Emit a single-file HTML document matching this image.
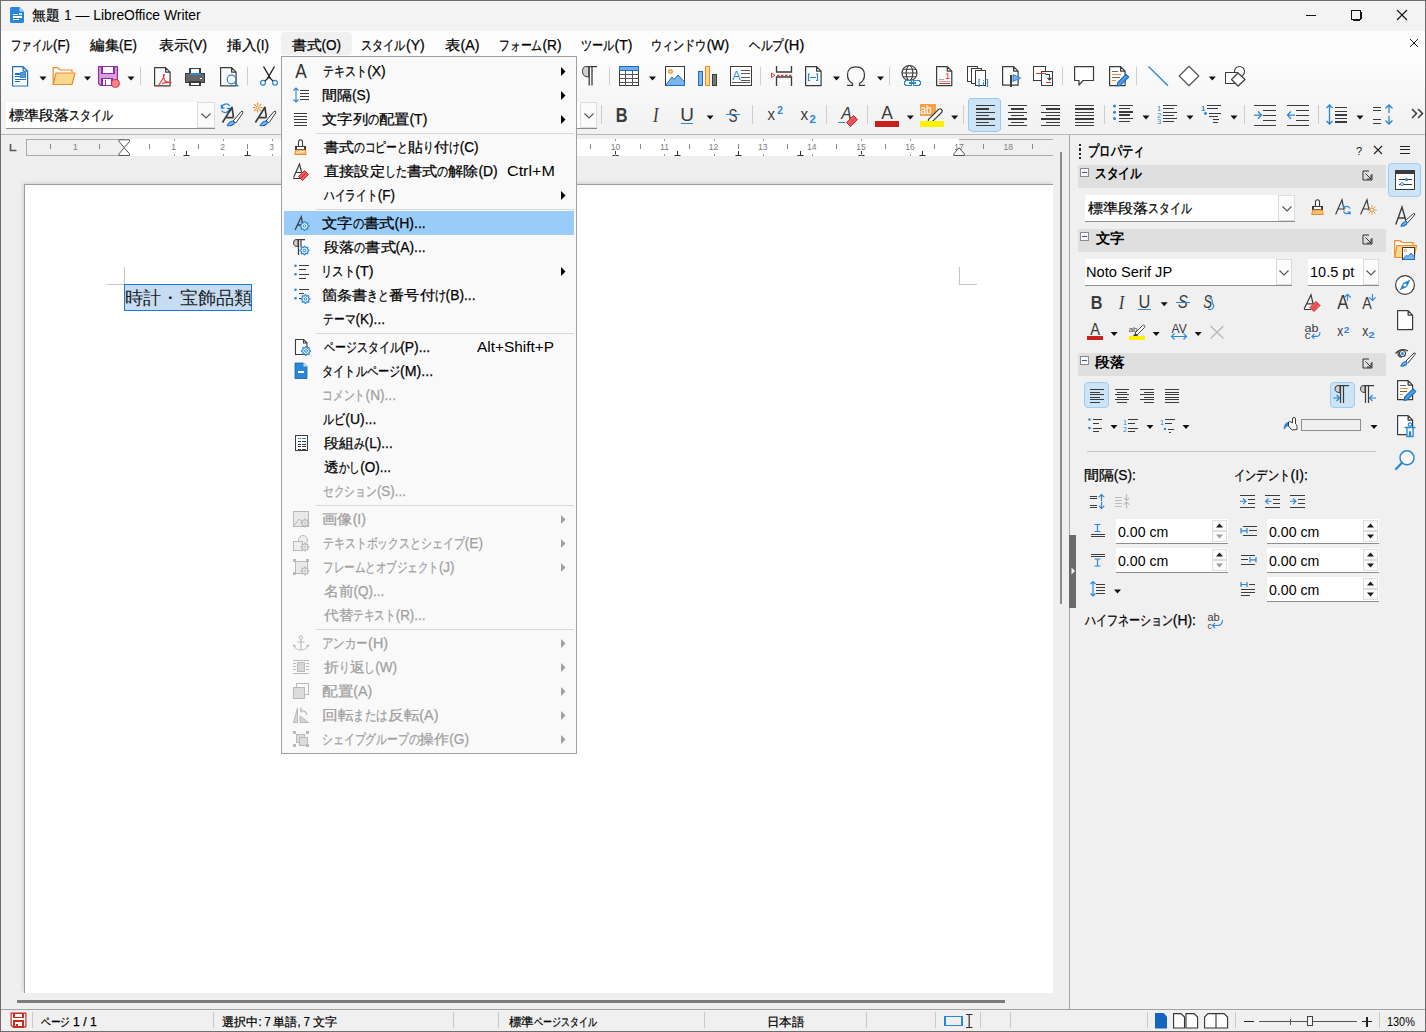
<!DOCTYPE html>
<html><head><meta charset="utf-8"><title>LibreOffice Writer</title><style>
*{box-sizing:border-box;margin:0;padding:0}
html,body{width:1426px;height:1032px;overflow:hidden;background:#f0f0f0}
body{position:relative;font-family:"Liberation Sans",sans-serif;color:#1a1a1a}
.a{position:absolute}
.t{position:absolute;white-space:nowrap;transform-origin:0 0;line-height:1;color:#000;-webkit-text-stroke:0.25px currentColor}
svg{position:absolute;overflow:visible}
svg rect{shape-rendering:crispEdges}
.r{display:inline-block;white-space:pre}
.r>span{display:inline-block;transform-origin:0 0;white-space:pre}
</style></head>
<body>
<div class="a" style="left:0px;top:0px;width:1426px;height:31px;background:#f3f3f3"></div><div class="a" style="left:0px;top:31px;width:1426px;height:103px;background:linear-gradient(#fdfdfd 0px,#fcfcfc 30px,#f1f1f1 103px)"></div><div class="a" style="left:0px;top:134px;width:1426px;height:1px;background:#b9b9b9"></div><div class="a" style="left:281px;top:32px;width:71px;height:23px;background:#f0f0f0;border-radius:4px"></div><div class="a" style="left:0px;top:135px;width:1069px;height:874px;background:#efefef"></div><div class="a" style="left:26px;top:139px;width:1027px;height:17px;background:#f0f0f0;border:1px solid #a9a9a9;border-right:none"></div><div class="a" style="left:124px;top:139px;width:835px;height:17px;background:#ffffff"></div><div class="a" style="left:24px;top:184px;width:1029px;height:809px;background:#ffffff;border-top:1px solid #9c9c9c;border-left:1px solid #9c9c9c;box-shadow:-1px -1px 4px rgba(0,0,0,.13)"></div><div class="a" style="left:1053px;top:150px;width:6px;height:843px;background:#efefef"></div><div class="a" style="left:0px;top:993px;width:1060px;height:7px;background:#efefef"></div><div class="a" style="left:107px;top:284px;width:18px;height:1px;background:#c4c4c4"></div><div class="a" style="left:124px;top:267px;width:1px;height:18px;background:#c4c4c4"></div><div class="a" style="left:959px;top:284px;width:18px;height:1px;background:#c4c4c4"></div><div class="a" style="left:959px;top:267px;width:1px;height:18px;background:#c4c4c4"></div><div class="a" style="left:124px;top:284px;width:128px;height:27px;background:#c5dcf2;border:1px solid #1c7ad4"></div><div class="a" style="left:1060px;top:152px;width:2px;height:452px;background:#8a8a8a"></div><div class="a" style="left:17px;top:1000px;width:988px;height:3px;background:#7c7c7c"></div><div class="a" style="left:1069px;top:135px;width:357px;height:874px;background:#f0f0f0"></div><div class="a" style="left:1069px;top:135px;width:1px;height:874px;background:#a6a6a6"></div><div class="a" style="left:1069px;top:535px;width:7px;height:73px;background:#6a6a6a"></div><svg style="left:1070px;top:566px" width="6" height="10"><path d="M1.5 1.5 L5 5 L1.5 8.5Z" fill="#f0f0f0"/></svg><div class="a" style="left:1078px;top:165px;width:308px;height:23px;background:#dfdfdf"></div><div class="a" style="left:1080px;top:168px;width:9px;height:9px;background:#fafafa;border:1px solid #8a8a8a"></div><div class="a" style="left:1082px;top:172px;width:5px;height:1px;background:#3b55a6"></div><div class="a" style="left:1078px;top:229px;width:308px;height:23px;background:#dfdfdf"></div><div class="a" style="left:1080px;top:232px;width:9px;height:9px;background:#fafafa;border:1px solid #8a8a8a"></div><div class="a" style="left:1082px;top:236px;width:5px;height:1px;background:#3b55a6"></div><div class="a" style="left:1078px;top:353px;width:308px;height:23px;background:#dfdfdf"></div><div class="a" style="left:1080px;top:356px;width:9px;height:9px;background:#fafafa;border:1px solid #8a8a8a"></div><div class="a" style="left:1082px;top:360px;width:5px;height:1px;background:#3b55a6"></div><div class="a" style="left:1388px;top:163px;width:33px;height:34px;background:#cde4f7;border:1px solid #99cdf3;border-radius:4px"></div><div class="a" style="left:1085px;top:195px;width:210px;height:27px;background:#fff;border-bottom:1px solid #8c8c8c"></div><div class="a" style="left:1278px;top:195px;width:17px;height:26px;background:#fbfbfb;border:1px solid #dcdcdc"></div><svg style="left:1281.5px;top:205.5px" width="10" height="6"><path d="M0.5 0.5 L5 5 L9.5 0.5" fill="none" stroke="#555" stroke-width="1.1"/></svg><div class="a" style="left:1085px;top:259px;width:207px;height:27px;background:#fff;border-bottom:1px solid #8c8c8c"></div><div class="a" style="left:1275.5px;top:259px;width:16.5px;height:26px;background:#fbfbfb;border:1px solid #dcdcdc"></div><svg style="left:1278.75px;top:269.5px" width="10" height="6"><path d="M0.5 0.5 L5 5 L9.5 0.5" fill="none" stroke="#555" stroke-width="1.1"/></svg><div class="a" style="left:1308px;top:259px;width:71px;height:27px;background:#fff;border-bottom:1px solid #8c8c8c"></div><div class="a" style="left:1363px;top:259px;width:16px;height:26px;background:#fbfbfb;border:1px solid #dcdcdc"></div><svg style="left:1366.0px;top:269.5px" width="10" height="6"><path d="M0.5 0.5 L5 5 L9.5 0.5" fill="none" stroke="#555" stroke-width="1.1"/></svg><div class="a" style="left:6px;top:102px;width:209px;height:27px;background:#fff;border-bottom:1px solid #8c8c8c"></div><div class="a" style="left:197px;top:102px;width:18px;height:26px;background:#fbfbfb;border:1px solid #dcdcdc"></div><svg style="left:201.0px;top:112.5px" width="10" height="6"><path d="M0.5 0.5 L5 5 L9.5 0.5" fill="none" stroke="#555" stroke-width="1.1"/></svg><div class="a" style="left:560px;top:102px;width:37px;height:27px;background:#fff;border-bottom:1px solid #8c8c8c"></div><div class="a" style="left:580px;top:102px;width:17px;height:26px;background:#fbfbfb;border:1px solid #dcdcdc"></div><svg style="left:583.5px;top:112.5px" width="10" height="6"><path d="M0.5 0.5 L5 5 L9.5 0.5" fill="none" stroke="#555" stroke-width="1.1"/></svg><div class="a" style="left:1084px;top:382px;width:25px;height:26px;background:#cde4f7;border:1px solid #99cdf3;border-radius:4px"></div><div class="a" style="left:1330px;top:382px;width:25px;height:26px;background:#cde4f7;border:1px solid #99cdf3;border-radius:4px"></div><div class="a" style="left:1301px;top:419px;width:60px;height:12px;background:#f0f0f0;border:1px solid #8d8d8d"></div><div class="a" style="left:1087px;top:451px;width:289px;height:1px;background:#c3c3c3"></div><div class="a" style="left:1116px;top:519px;width:112px;height:25px;background:#fff;border-bottom:1px solid #8c8c8c"></div><div class="a" style="left:1212px;top:520px;width:15px;height:11px;background:#fbfbfb;border:1px solid #dedede"></div><div class="a" style="left:1212px;top:531px;width:15px;height:11px;background:#fbfbfb;border:1px solid #dedede"></div><svg style="left:1216px;top:523px" width="8" height="16"><path d="M0 4.5 L3.5 0.5 L7 4.5Z" fill="#1a1a1a"/><path d="M0 11.5 L3.5 15.5 L7 11.5Z" fill="#9b9b9b"/></svg><div class="a" style="left:1116px;top:548px;width:112px;height:25px;background:#fff;border-bottom:1px solid #8c8c8c"></div><div class="a" style="left:1212px;top:549px;width:15px;height:11px;background:#fbfbfb;border:1px solid #dedede"></div><div class="a" style="left:1212px;top:560px;width:15px;height:11px;background:#fbfbfb;border:1px solid #dedede"></div><svg style="left:1216px;top:552px" width="8" height="16"><path d="M0 4.5 L3.5 0.5 L7 4.5Z" fill="#1a1a1a"/><path d="M0 11.5 L3.5 15.5 L7 11.5Z" fill="#9b9b9b"/></svg><div class="a" style="left:1267px;top:519px;width:112px;height:25px;background:#fff;border-bottom:1px solid #8c8c8c"></div><div class="a" style="left:1363px;top:520px;width:15px;height:11px;background:#fbfbfb;border:1px solid #dedede"></div><div class="a" style="left:1363px;top:531px;width:15px;height:11px;background:#fbfbfb;border:1px solid #dedede"></div><svg style="left:1367px;top:523px" width="8" height="16"><path d="M0 4.5 L3.5 0.5 L7 4.5Z" fill="#1a1a1a"/><path d="M0 11.5 L3.5 15.5 L7 11.5Z" fill="#1a1a1a"/></svg><div class="a" style="left:1267px;top:548px;width:112px;height:25px;background:#fff;border-bottom:1px solid #8c8c8c"></div><div class="a" style="left:1363px;top:549px;width:15px;height:11px;background:#fbfbfb;border:1px solid #dedede"></div><div class="a" style="left:1363px;top:560px;width:15px;height:11px;background:#fbfbfb;border:1px solid #dedede"></div><svg style="left:1367px;top:552px" width="8" height="16"><path d="M0 4.5 L3.5 0.5 L7 4.5Z" fill="#1a1a1a"/><path d="M0 11.5 L3.5 15.5 L7 11.5Z" fill="#1a1a1a"/></svg><div class="a" style="left:1267px;top:577px;width:112px;height:25px;background:#fff;border-bottom:1px solid #8c8c8c"></div><div class="a" style="left:1363px;top:578px;width:15px;height:11px;background:#fbfbfb;border:1px solid #dedede"></div><div class="a" style="left:1363px;top:589px;width:15px;height:11px;background:#fbfbfb;border:1px solid #dedede"></div><svg style="left:1367px;top:581px" width="8" height="16"><path d="M0 4.5 L3.5 0.5 L7 4.5Z" fill="#1a1a1a"/><path d="M0 11.5 L3.5 15.5 L7 11.5Z" fill="#1a1a1a"/></svg><div class="a" style="left:0px;top:1009px;width:1426px;height:23px;background:#f0f0f0;border-top:1px solid #a3a3a3"></div><div class="a" style="left:32px;top:1012px;width:1px;height:16px;background:#c9c9c9"></div><div class="a" style="left:212.6px;top:1012px;width:1px;height:16px;background:#c9c9c9"></div><div class="a" style="left:452.7px;top:1012px;width:1px;height:16px;background:#c9c9c9"></div><div class="a" style="left:498.4px;top:1012px;width:1px;height:16px;background:#c9c9c9"></div><div class="a" style="left:704px;top:1012px;width:1px;height:16px;background:#c9c9c9"></div><div class="a" style="left:865.7px;top:1012px;width:1px;height:16px;background:#c9c9c9"></div><div class="a" style="left:934.6px;top:1012px;width:1px;height:16px;background:#c9c9c9"></div><div class="a" style="left:980px;top:1012px;width:1px;height:16px;background:#c9c9c9"></div><div class="a" style="left:1010.4px;top:1012px;width:1px;height:16px;background:#c9c9c9"></div><div class="a" style="left:1146.7px;top:1012px;width:1px;height:16px;background:#c9c9c9"></div><div class="a" style="left:1234.6px;top:1012px;width:1px;height:16px;background:#c9c9c9"></div><div class="a" style="left:1378.5px;top:1012px;width:1px;height:16px;background:#c9c9c9"></div><div class="a" style="left:1069px;top:1000px;width:1px;height:9px;background:#a6a6a6"></div>
<svg style="left:0;top:0" width="1426" height="1032" viewBox="0 0 1426 1032"><g transform="translate(12,66)"><path d="M0.6 0.6 H11.1 L15.6 5.1 V20.0 H0.6Z M11.1 0.6 V5.1 H15.6" fill="#fff" stroke="#1e6ebf" stroke-width="1.2" stroke-linejoin="round"/><rect x="2.5" y="7.4" width="5" height="1.1" fill="#1e6ebf"/><rect x="2.5" y="9.9" width="5" height="1.1" fill="#1e6ebf"/><rect x="2.5" y="12.6" width="11" height="1.1" fill="#1e6ebf"/><rect x="2.5" y="15.2" width="5" height="1.1" fill="#1e6ebf"/><rect x="8.5" y="6.8" width="5.3" height="4.5" fill="#4d9de0" stroke="#1e6ebf" stroke-width="0.8"/></g><path d="M39.5 76.5 h7 l-3.5 4z" fill="#111"/><g transform="translate(52.5,67)"><path d="M0.7 17.5 V0.7 H5.5 L7.5 3 H19.5 V5.5" fill="none" stroke="#f08a2c" stroke-width="1.2"/><path d="M0.7 17.5 L3.5 6 H22.5 L19.5 17.5Z" fill="#f7d98d" stroke="#f08a2c" stroke-width="1.2" stroke-linejoin="round"/></g><path d="M84 76.5 h7 l-3.5 4z" fill="#111"/><g transform="translate(98,66)"><path d="M0.6 0.6 H19.4 V19.4 H2.5 L0.6 17.5Z" fill="#d7a1e0" stroke="#8e2ba6" stroke-width="1.2"/><rect x="4" y="0.6" width="12" height="6.5" fill="#fff" stroke="#8e2ba6" stroke-width="1.2"/><rect x="4" y="12.5" width="10" height="6.9" fill="#fff" stroke="#8e2ba6" stroke-width="1.2"/><rect x="6.5" y="14" width="1.8" height="5.4" fill="#8e2ba6"/><circle cx="17.4" cy="17.4" r="3.9" fill="#f5868b" stroke="#e22d35" stroke-width="1.1"/></g><path d="M127.5 76.5 h7 l-3.5 4z" fill="#111"/><rect x="140" y="67" width="1" height="18" fill="#cdcdcd"/><g transform="translate(154,67)"><path d="M0.6 0.6 H11.600000000000001 L16.1 5.1 V18.8 H0.6Z M11.600000000000001 0.6 V5.1 H16.1" fill="none" stroke="#3b3b3b" stroke-width="1.2" stroke-linejoin="round"/><path d="M4 19.5 L9.5 10.5 Q11 7 9.5 7.5 Q9 9 10.5 13 Q12.5 16 17.5 15.5 Q13 15 8 16.5" fill="none" stroke="#e3373a" stroke-width="1.1"/></g><g transform="translate(185,68)"><rect x="5" y="0.6" width="10" height="5.5" fill="#fff" stroke="#3b3b3b" stroke-width="1.2"/><rect x="4.5" y="5" width="11" height="2" fill="#2b87d3"/><rect x="0.6" y="5.6" width="19" height="9" rx="1" fill="#666" stroke="#3b3b3b" stroke-width="1.2"/><rect x="15" y="10" width="2" height="1" fill="#fff"/><rect x="5" y="14" width="10" height="3.8" fill="#fff" stroke="#3b3b3b" stroke-width="1.2"/><rect x="4.5" y="5" width="11" height="2" fill="#2b87d3"/></g><g transform="translate(220,67)"><path d="M0.6 0.6 H11.600000000000001 L16.1 5.1 V18.8 H0.6Z M11.600000000000001 0.6 V5.1 H16.1" fill="none" stroke="#3b3b3b" stroke-width="1.2" stroke-linejoin="round"/><circle cx="11.5" cy="12.5" r="4.3" fill="#fff" stroke="#2b87d3" stroke-width="1.2"/><path d="M14.5 15.5 L18.5 19.5" stroke="#2b87d3" stroke-width="1.3"/></g><rect x="247" y="67" width="1" height="18" fill="#cdcdcd"/><g transform="translate(260,66)"><path d="M3.5 0.5 L10.5 12.5 M14.5 0.5 L7.5 12.5" stroke="#222" stroke-width="1.4"/><circle cx="3" cy="16.8" r="2.4" fill="#fff" stroke="#2b87d3" stroke-width="1.2"/><circle cx="15" cy="16.8" r="2.4" fill="#fff" stroke="#2b87d3" stroke-width="1.2"/><path d="M5 15 L9 11 L13 15" fill="none" stroke="#222" stroke-width="1.2"/></g><g transform="translate(582,66)"><path d="M6.8 0.6 H3.5 Q0.5 0.6 0.5 5.5 Q0.5 11 6.8 11Z" fill="#cfcfcf" stroke="#3b3b3b" stroke-width="1"/><path d="M7.2 0.6 V19.6 M10 0.6 V19.6 M6.5 0.6 H15" stroke="#3b3b3b" stroke-width="1.3"/></g><rect x="609" y="67" width="1" height="18" fill="#cdcdcd"/><g transform="translate(619,66)"><rect x="0.5" y="0.5" width="19" height="19" fill="#fff" stroke="#3b3b3b" stroke-width="1"/><rect x="1" y="1" width="18" height="3" fill="#6fb0ec"/><rect x="0.5" y="0.5" width="19" height="3.5" fill="none" stroke="#1e6ebf" stroke-width="1"/><rect x="6" y="4" width="1" height="15.5" fill="#555"/><rect x="13" y="4" width="1" height="15.5" fill="#555"/><rect x="0.5" y="8" width="19" height="1" fill="#555"/><rect x="0.5" y="12" width="19" height="1" fill="#555"/><rect x="0.5" y="15.5" width="19" height="1" fill="#555"/></g><path d="M649 76.5 h7 l-3.5 4z" fill="#111"/><g transform="translate(665,66)"><rect x="0.6" y="0.6" width="19" height="19" fill="#fff" stroke="#3b3b3b" stroke-width="1.2"/><circle cx="5.5" cy="5.5" r="2" fill="#fbc97a" stroke="#f08a2c" stroke-width="1"/><path d="M1 19 L7 11 L9 13.5 L13 9 L19.5 16 V19.5 H1Z" fill="#7ab6ec" stroke="#1e6ebf" stroke-width="1"/></g><g transform="translate(698,66)"><rect x="0.5" y="5.5" width="4.2" height="14" fill="#7ab6ec" stroke="#1e6ebf" stroke-width="1"/><rect x="7.3" y="0.5" width="4.2" height="19" fill="#fad58a" stroke="#f08a2c" stroke-width="1"/><rect x="14.2" y="8.5" width="4.2" height="11" fill="#777" stroke="#3b3b3b" stroke-width="1"/></g><g transform="translate(730,66)"><rect x="0.6" y="0.6" width="21" height="19" fill="#fff" stroke="#3b3b3b" stroke-width="1.2"/><text x="2.3" y="14" font-family="Liberation Sans" font-size="12.5" fill="#2b87d3" font-weight="normal" font-style="normal" text-anchor="start">A</text><rect x="11" y="4.0" width="9" height="1.1" fill="#555"/><rect x="11" y="7.3" width="9" height="1.1" fill="#555"/><rect x="11" y="10.6" width="9" height="1.1" fill="#555"/><rect x="11" y="13.899999999999999" width="9" height="1.1" fill="#555"/><rect x="2" y="16" width="18" height="1.1" fill="#555"/></g><rect x="760" y="67" width="1" height="18" fill="#cdcdcd"/><g transform="translate(771,66)"><path d="M5.5 0 V6 H20.5 V0 M5.5 20 V11 H20.5 V20" fill="none" stroke="#3b3b3b" stroke-width="1.3"/><path d="M0.5 7 L4 9.3 L0.5 11.6Z" fill="none" stroke="#e3373a" stroke-width="1"/><path d="M6 9.4 H20.5" stroke="#e3373a" stroke-width="1.3" stroke-dasharray="2.5 1.5"/></g><g transform="translate(805,66)"><path d="M0.6 0.6 H11.600000000000001 L16.1 5.1 V19.6 H0.6Z M11.600000000000001 0.6 V5.1 H16.1" fill="none" stroke="#3b3b3b" stroke-width="1.2" stroke-linejoin="round"/><path d="M5 8 H3.5 V14.5 H5 M11 8 H12.5 V14.5 H11" fill="none" stroke="#2b87d3" stroke-width="1.2"/><rect x="5" y="10.6" width="6" height="1.5" fill="#2b87d3"/></g><path d="M833 76.5 h7 l-3.5 4z" fill="#111"/><g transform="translate(846,66)"><path d="M1 19.3 H6.5 V17.5 Q1.5 14.5 1.5 9 Q1.5 0.8 10 0.8 Q18.5 0.8 18.5 9 Q18.5 14.5 13.5 17.5 V19.3 H19" fill="none" stroke="#3b3b3b" stroke-width="1.3"/></g><path d="M877 76.5 h7 l-3.5 4z" fill="#111"/><rect x="889" y="67" width="1" height="18" fill="#cdcdcd"/><g transform="translate(901,65)"><circle cx="8.5" cy="8" r="7.5" fill="#fff" stroke="#3b3b3b" stroke-width="1.2"/><ellipse cx="8.5" cy="8" rx="3.3" ry="7.5" fill="none" stroke="#3b3b3b" stroke-width="1.1"/><path d="M1 8 H16 M2 4.2 H15 M2 11.8 H15" stroke="#3b3b3b" stroke-width="1.1"/><rect x="3.5" y="15.5" width="7.5" height="5" rx="2.5" fill="#fff" stroke="#2b87d3" stroke-width="1.3"/><rect x="12" y="15.5" width="7.5" height="5" rx="2.5" fill="#fff" stroke="#2b87d3" stroke-width="1.3"/><rect x="8" y="17.4" width="7" height="1.3" fill="#2b87d3"/></g><g transform="translate(936,66)"><path d="M0.6 0.6 H11.299999999999999 L15.799999999999999 5.1 V19.6 H0.6Z M11.299999999999999 0.6 V5.1 H15.799999999999999" fill="none" stroke="#3b3b3b" stroke-width="1.2" stroke-linejoin="round"/><text x="9" y="12.5" font-family="Liberation Sans" font-size="9.5" fill="#e3373a" font-weight="normal" font-style="normal" text-anchor="start">1</text><rect x="2.5" y="13" width="5" height="1" fill="#aaa"/><rect x="2.5" y="15" width="11" height="1" fill="#aaa"/><rect x="2.5" y="17" width="11" height="1.2" fill="#e3373a"/></g><g transform="translate(967,66)"><rect x="0.6" y="0.6" width="10" height="15" fill="#fff" stroke="#3b3b3b" stroke-width="1.2"/><rect x="4.6" y="2.6" width="10" height="15" fill="#fff" stroke="#3b3b3b" stroke-width="1.2"/><rect x="8.6" y="4.6" width="10" height="15" fill="#fff" stroke="#3b3b3b" stroke-width="1.2"/><path d="M13 13.5 H12 V20.5 H13 M19.5 13.5 H20.5 V20.5 H19.5" fill="none" stroke="#2b87d3" stroke-width="1.1"/><rect x="15.7" y="16" width="1.3" height="4" fill="#2b87d3"/><rect x="15.7" y="14" width="1.3" height="1.2" fill="#2b87d3"/></g><g transform="translate(1002,66)"><path d="M0.6 0.6 H11.600000000000001 L16.1 5.1 V19.200000000000003 H0.6Z M11.600000000000001 0.6 V5.1 H16.1" fill="none" stroke="#3b3b3b" stroke-width="1.2" stroke-linejoin="round"/><rect x="8" y="9" width="2" height="12" fill="#3b3b3b"/><path d="M11 8.5 L18.5 12 L11 15.5Z" fill="#6fb0ec" stroke="#2b87d3" stroke-width="1"/></g><g transform="translate(1033,66)"><rect x="0.6" y="0.6" width="12" height="14" fill="#fff" stroke="#3b3b3b" stroke-width="1.2"/><rect x="8.6" y="5.6" width="11" height="14" fill="#fff" stroke="#3b3b3b" stroke-width="1.2"/><rect x="2.5" y="7" width="6" height="1.2" fill="#e3373a"/><path d="M12.5 8.5 H16.5 V14 M14.5 12 L16.5 14 L18.5 12" fill="none" stroke="#3b3b3b" stroke-width="1.1"/><rect x="13" y="16" width="5" height="1.2" fill="#e3373a"/><rect x="8.6" y="7" width="4" height="1.2" fill="#e3373a"/></g><rect x="1062" y="67" width="1" height="18" fill="#cdcdcd"/><g transform="translate(1074,66)"><path d="M0.6 0.6 H19.5 V14.5 H9 L5 19 V14.5 H0.6Z" fill="#fff" stroke="#3b3b3b" stroke-width="1.2" stroke-linejoin="round"/></g><g transform="translate(1109,66)"><path d="M0.6 0.6 H11.600000000000001 L16.1 5.1 V19.6 H0.6Z M11.600000000000001 0.6 V5.1 H16.1" fill="none" stroke="#3b3b3b" stroke-width="1.2" stroke-linejoin="round"/><rect x="3" y="5" width="6" height="1" fill="#666"/><rect x="3" y="8" width="6" height="1.1" fill="#f08a2c"/><rect x="5" y="8" width="0" height="0"/><rect x="3" y="11" width="8" height="1.1" fill="#666"/><rect x="3" y="14" width="4" height="1.1" fill="#f08a2c"/><rect x="8" y="8" width="4" height="1.1" fill="#f08a2c"/><path d="M8 20 L8.8 16.5 L17 8.3 L19.7 11 L11.5 19.2Z" fill="#4d9de0" stroke="#1e6ebf" stroke-width="1.1" stroke-linejoin="round"/></g><rect x="1136" y="67" width="1" height="18" fill="#cdcdcd"/><path d="M1148.5 66.5 L1168 85.7" stroke="#2b87d3" stroke-width="1.3"/><path d="M1189 66.3 L1198.8 76 L1189 85.7 L1179.2 76Z" fill="#fff" stroke="#555" stroke-width="1.2" stroke-linejoin="round"/><path d="M1208.8 76.5 h7 l-3.5 4z" fill="#111"/><g transform="translate(1225,66)"><circle cx="14.5" cy="5.5" r="5" fill="#fff" stroke="#3b3b3b" stroke-width="1.1"/><rect x="0.6" y="6.5" width="12" height="11" fill="#fff" stroke="#3b3b3b" stroke-width="1.2"/><path d="M13 7 L20 13.5 L13 20 L6.5 13.5Z" fill="#fff" stroke="#3b3b3b" stroke-width="1.2" stroke-linejoin="round"/></g><g transform="translate(220.5,103)"><path d="M9.2 3 A4.4 4.4 0 0 0 1.2 4.5 M0.9 1.8 V5 H4 M1 7.5 A4.4 4.4 0 0 0 9 6 M9.4 8.6 V5.4 H6.2" fill="none" stroke="#2b87d3" stroke-width="1.3"/><path d="M2 19.5 L11.5 4.3 L13 14.5 M6 14.6 H13" fill="none" stroke="#3b3b3b" stroke-width="1.7" stroke-linejoin="round"/><path d="M12.5 18.2 L20.5 8.6 Q22.8 7.3 22.4 9.9 L15.5 19.8Z" fill="#fff" stroke="#3b3b3b" stroke-width="1"/><path d="M6.8 22.5 Q8.5 18.5 12.5 18 Q14.8 19.3 13.3 21 Q10.5 23.3 6.8 22.5Z" fill="#7ab6ec" stroke="#1e6ebf" stroke-width="1.1"/></g><g transform="translate(253.4,103)"><circle cx="4.2" cy="4.6" r="1.6" fill="#fff" stroke="#f08a2c" stroke-width="1"/><path d="M6.70 4.60 L9.10 4.60" stroke="#f08a2c" stroke-width="1.1"/><path d="M1.70 4.60 L-0.70 4.60" stroke="#f08a2c" stroke-width="1.1"/><path d="M4.20 7.10 L4.20 9.50" stroke="#f08a2c" stroke-width="1.1"/><path d="M4.20 2.10 L4.20 -0.30" stroke="#f08a2c" stroke-width="1.1"/><path d="M5.95 6.35 L7.63 8.03" stroke="#f08a2c" stroke-width="1.1"/><path d="M2.45 6.35 L0.77 8.03" stroke="#f08a2c" stroke-width="1.1"/><path d="M5.95 2.85 L7.63 1.17" stroke="#f08a2c" stroke-width="1.1"/><path d="M2.45 2.85 L0.77 1.17" stroke="#f08a2c" stroke-width="1.1"/><path d="M2 19.5 L11.5 4.3 L13 14.5 M6 14.6 H13" fill="none" stroke="#3b3b3b" stroke-width="1.7" stroke-linejoin="round"/><path d="M12.5 18.2 L20.5 8.6 Q22.8 7.3 22.4 9.9 L15.5 19.8Z" fill="#fff" stroke="#3b3b3b" stroke-width="1"/><path d="M6.8 22.5 Q8.5 18.5 12.5 18 Q14.8 19.3 13.3 21 Q10.5 23.3 6.8 22.5Z" fill="#7ab6ec" stroke="#1e6ebf" stroke-width="1.1"/></g><rect x="601" y="105" width="1" height="19" fill="#cdcdcd"/><text transform="matrix(0.16393 0 0 0.19420 615.752 121.800)" font-family="Liberation Sans" font-weight="bold" font-style="normal" font-size="100" fill="#3b3b3b">B</text><text transform="matrix(0.16757 0 0 0.20615 653.000 121.800)" font-family="Liberation Serif" font-weight="normal" font-style="italic" font-size="100" fill="#3b3b3b">I</text><text transform="matrix(0.18929 0 0 0.18714 680.186 121.313)" font-family="Liberation Sans" font-weight="normal" font-style="normal" font-size="100" fill="#3b3b3b">U</text><rect x="681.4" y="123" width="11.3" height="1.3" fill="#2b87d3"/><path d="M706.6 115.4 h7 l-3.5 4z" fill="#111"/><text transform="matrix(0.13509 0 0 0.18873 728.425 121.611)" font-family="Liberation Sans" font-weight="normal" font-style="normal" font-size="100" fill="#3b3b3b">S</text><rect x="725.9" y="113.8" width="14.1" height="1.2" fill="#2b87d3"/><rect x="752" y="105" width="1" height="19" fill="#cdcdcd"/><text transform="matrix(0.15000 0 0 0.15660 767.450 119.900)" font-family="Liberation Sans" font-weight="normal" font-style="normal" font-size="100" fill="#3b3b3b">x</text><text transform="matrix(0.10204 0 0 0.10000 777.294 114.000)" font-family="Liberation Sans" font-weight="bold" font-style="normal" font-size="100" fill="#2b87d3">2</text><text transform="matrix(0.15417 0 0 0.15660 800.546 119.900)" font-family="Liberation Sans" font-weight="normal" font-style="normal" font-size="100" fill="#3b3b3b">x</text><text transform="matrix(0.11429 0 0 0.10571 809.457 123.400)" font-family="Liberation Sans" font-weight="bold" font-style="normal" font-size="100" fill="#2b87d3">2</text><rect x="826" y="105" width="1" height="19" fill="#cdcdcd"/><text transform="matrix(0.15758 0 0 0.17391 841.288 119.400)" font-family="Liberation Sans" font-weight="normal" font-style="italic" font-size="100" fill="#3b3b3b">A</text><rect x="838" y="121.8" width="7" height="1.2" fill="#2b87d3"/><path d="M846.5 122.5 L853.5 115.5 L857.5 119.5 L850.5 126.5Z" fill="#f25f63" stroke="#c92027" stroke-width="1"/><path d="M849 124.5 L855.5 118" stroke="#c92027" stroke-width="0.9"/><rect x="867" y="105" width="1" height="19" fill="#cdcdcd"/><text transform="matrix(0.17424 0 0 0.17971 881.200 119.400)" font-family="Liberation Sans" font-weight="normal" font-style="normal" font-size="100" fill="#3b3b3b">A</text><rect x="875" y="121" width="24" height="6" fill="#c9211e"/><path d="M906.8 115.5 h7 l-3.5 4z" fill="#111"/><rect x="919.5" y="103.8" width="16.5" height="11.8" fill="#f5a04b"/><text transform="matrix(0.10097 0 0 0.12297 920.396 113.577)" font-family="Liberation Sans" font-weight="normal" font-style="normal" font-size="100" fill="#fff">ab</text><path d="M928.5 119.5 L938.5 109.5 Q940 108 941.5 109.5 Q943 111 941.5 112.5 L931.5 122.5 L928 123Z" fill="#fff" stroke="#3b3b3b" stroke-width="1.1"/><path d="M928.2 120 L928 123 L931 122.7Z" fill="#3b3b3b"/><rect x="919.5" y="121" width="24" height="6" fill="#fff200"/><path d="M951.2 115.5 h7 l-3.5 4z" fill="#111"/><rect x="963" y="105" width="1" height="19" fill="#cdcdcd"/><rect x="968.5" y="98.5" width="32" height="32.5" rx="3" fill="#cde4f7" stroke="#96caf2" stroke-width="1"/><rect x="975.50" y="105.00" width="19.00" height="1.3" fill="#3b3b3b"/><rect x="975.50" y="108.30" width="13.68" height="1.3" fill="#3b3b3b"/><rect x="975.50" y="111.60" width="19.00" height="1.3" fill="#3b3b3b"/><rect x="975.50" y="114.90" width="13.68" height="1.3" fill="#3b3b3b"/><rect x="975.50" y="118.20" width="19.00" height="1.3" fill="#3b3b3b"/><rect x="975.50" y="121.50" width="13.68" height="1.3" fill="#3b3b3b"/><rect x="975.50" y="124.80" width="19.00" height="1.3" fill="#3b3b3b"/><rect x="1008.00" y="105.00" width="19.00" height="1.3" fill="#3b3b3b"/><rect x="1010.66" y="108.30" width="13.68" height="1.3" fill="#3b3b3b"/><rect x="1008.00" y="111.60" width="19.00" height="1.3" fill="#3b3b3b"/><rect x="1010.66" y="114.90" width="13.68" height="1.3" fill="#3b3b3b"/><rect x="1008.00" y="118.20" width="19.00" height="1.3" fill="#3b3b3b"/><rect x="1010.66" y="121.50" width="13.68" height="1.3" fill="#3b3b3b"/><rect x="1008.00" y="124.80" width="19.00" height="1.3" fill="#3b3b3b"/><rect x="1041.00" y="105.00" width="19.00" height="1.3" fill="#3b3b3b"/><rect x="1046.32" y="108.30" width="13.68" height="1.3" fill="#3b3b3b"/><rect x="1041.00" y="111.60" width="19.00" height="1.3" fill="#3b3b3b"/><rect x="1046.32" y="114.90" width="13.68" height="1.3" fill="#3b3b3b"/><rect x="1041.00" y="118.20" width="19.00" height="1.3" fill="#3b3b3b"/><rect x="1046.32" y="121.50" width="13.68" height="1.3" fill="#3b3b3b"/><rect x="1041.00" y="124.80" width="19.00" height="1.3" fill="#3b3b3b"/><rect x="1074.50" y="105.00" width="19.00" height="1.3" fill="#3b3b3b"/><rect x="1074.50" y="108.30" width="19.00" height="1.3" fill="#3b3b3b"/><rect x="1074.50" y="111.60" width="19.00" height="1.3" fill="#3b3b3b"/><rect x="1074.50" y="114.90" width="19.00" height="1.3" fill="#3b3b3b"/><rect x="1074.50" y="118.20" width="19.00" height="1.3" fill="#3b3b3b"/><rect x="1074.50" y="121.50" width="19.00" height="1.3" fill="#3b3b3b"/><rect x="1074.50" y="124.80" width="19.00" height="1.3" fill="#3b3b3b"/><rect x="1103.5" y="105" width="1" height="19" fill="#cdcdcd"/><g transform="translate(1113,104)"><circle cx="1.5" cy="2.0" r="1.5" fill="#2b87d3"/><rect x="6" y="1.0" width="14" height="1.2" fill="#3b3b3b"/><rect x="6" y="4.0" width="11" height="1.2" fill="#3b3b3b"/><circle cx="1.5" cy="8.3" r="1.5" fill="#2b87d3"/><rect x="6" y="7.3" width="14" height="1.2" fill="#3b3b3b"/><rect x="6" y="10.3" width="11" height="1.2" fill="#3b3b3b"/><circle cx="1.5" cy="14.6" r="1.5" fill="#2b87d3"/><rect x="6" y="13.6" width="14" height="1.2" fill="#3b3b3b"/><rect x="6" y="16.6" width="11" height="1.2" fill="#3b3b3b"/></g><path d="M1142.5 115.5 h7 l-3.5 4z" fill="#111"/><g transform="translate(1157,104)"><text x="0" y="7.0" font-family="Liberation Sans" font-size="7.5" fill="#2b87d3" font-weight="normal" font-style="normal" text-anchor="start">1</text><rect x="6" y="1.0" width="14" height="1.2" fill="#3b3b3b"/><rect x="6" y="4.0" width="11" height="1.2" fill="#3b3b3b"/><text x="0" y="13.5" font-family="Liberation Sans" font-size="7.5" fill="#2b87d3" font-weight="normal" font-style="normal" text-anchor="start">2</text><rect x="6" y="7.5" width="14" height="1.2" fill="#3b3b3b"/><rect x="6" y="10.5" width="11" height="1.2" fill="#3b3b3b"/><text x="0" y="20.0" font-family="Liberation Sans" font-size="7.5" fill="#2b87d3" font-weight="normal" font-style="normal" text-anchor="start">3</text><rect x="6" y="14.0" width="14" height="1.2" fill="#3b3b3b"/><rect x="6" y="17.0" width="11" height="1.2" fill="#3b3b3b"/></g><path d="M1186.5 115.5 h7 l-3.5 4z" fill="#111"/><g transform="translate(1201,104)"><text x="0" y="7" font-family="Liberation Sans" font-size="7.5" fill="#2b87d3" font-weight="bold" font-style="normal" text-anchor="start">1</text><rect x="6" y="1" width="14" height="1.2" fill="#3b3b3b"/><rect x="6" y="4" width="11" height="1.2" fill="#3b3b3b"/><circle cx="4.5" cy="9.5" r="1.4" fill="#2b87d3"/><rect x="8" y="8.5" width="12" height="1.2" fill="#3b3b3b"/><rect x="8" y="11.5" width="9" height="1.2" fill="#3b3b3b"/><rect x="12" y="15" width="6" height="1.2" fill="#3b3b3b"/><rect x="12" y="18" width="5" height="1.2" fill="#3b3b3b"/></g><path d="M1230.5 115.5 h7 l-3.5 4z" fill="#111"/><rect x="1243.5" y="105" width="1" height="19" fill="#cdcdcd"/><rect x="1254" y="104.5" width="22" height="1.3" fill="#3b3b3b"/><rect x="1263" y="109.5" width="13" height="1.3" fill="#3b3b3b"/><rect x="1263" y="114.5" width="13" height="1.3" fill="#3b3b3b"/><rect x="1263" y="119.5" width="13" height="1.3" fill="#3b3b3b"/><rect x="1254" y="124.5" width="22" height="1.3" fill="#3b3b3b"/><path d="M1254 115.1 H1261.5 M1258 111.5 L1261.5 115.1 L1258 118.7" fill="none" stroke="#2b87d3" stroke-width="1.3"/><rect x="1287" y="104.5" width="22" height="1.3" fill="#3b3b3b"/><rect x="1296" y="109.5" width="13" height="1.3" fill="#3b3b3b"/><rect x="1296" y="114.5" width="13" height="1.3" fill="#3b3b3b"/><rect x="1296" y="119.5" width="13" height="1.3" fill="#3b3b3b"/><rect x="1287" y="124.5" width="22" height="1.3" fill="#3b3b3b"/><path d="M1295 115.1 H1287.5 M1291 111.5 L1287.5 115.1 L1291 118.7" fill="none" stroke="#2b87d3" stroke-width="1.3"/><rect x="1317.5" y="105" width="1" height="19" fill="#cdcdcd"/><g transform="translate(1326,104)"><path d="M3.5 1 V20 M0.5 4 L3.5 1 L6.5 4 M0.5 17 L3.5 20 L6.5 17" fill="none" stroke="#2b87d3" stroke-width="1.3"/><rect x="9" y="3.0" width="12" height="1.3" fill="#3b3b3b"/><rect x="9" y="6.6" width="12" height="1.3" fill="#3b3b3b"/><rect x="9" y="10.2" width="12" height="1.3" fill="#3b3b3b"/><rect x="9" y="13.8" width="12" height="1.3" fill="#3b3b3b"/><rect x="9" y="17.4" width="12" height="1.3" fill="#3b3b3b"/></g><path d="M1356.5 115.5 h7 l-3.5 4z" fill="#111"/><g transform="translate(1373,104)"><rect x="0" y="2.5" width="8" height="1.3" fill="#3b3b3b"/><rect x="0" y="6" width="8" height="1.3" fill="#3b3b3b"/><rect x="0" y="15" width="8" height="1.3" fill="#3b3b3b"/><rect x="0" y="18.5" width="8" height="1.3" fill="#3b3b3b"/><path d="M16 1 V9 M12.5 4.5 L16 1 L19.5 4.5 M16 12 V20 M12.5 16.5 L16 20 L19.5 16.5" fill="none" stroke="#2b87d3" stroke-width="1.3"/></g><path d="M1412 109 L1416.5 113.5 L1412 118 M1418 109 L1422.5 113.5 L1418 118" fill="none" stroke="#3b3b3b" stroke-width="1.5"/></svg><svg style="left:0;top:0" width="1426" height="1032" viewBox="0 0 1426 1032"><g transform="translate(10,7)"><path d="M1.5 0 H9.5 L14 4.5 V14.5 Q14 16 12.5 16 H1.5 Q0 16 0 14.5 V1.5 Q0 0 1.5 0Z" fill="#2a86d8"/><path d="M9.5 0 V4.5 H14Z" fill="#9fd0f5"/><rect x="3" y="7" width="5" height="1.2" fill="#fff"/><rect x="8.5" y="6" width="3" height="2.2" fill="#cfe6fa"/><rect x="3" y="9.3" width="8.5" height="1.2" fill="#fff"/><rect x="3" y="11.6" width="6" height="1.2" fill="#fff"/></g><rect x="1306" y="15" width="10" height="1" fill="#111"/><rect x="1351.5" y="10.5" width="9.5" height="9.5" rx="1.5" fill="none" stroke="#111" stroke-width="1.1"/><path d="M1397 10 L1407 20 M1407 10 L1397 20" stroke="#111" stroke-width="1.1"/><path d="M1410 39 L1418 47 M1418 39 L1410 47" stroke="#222" stroke-width="1"/><rect x="1079" y="144.0" width="2.2" height="2.2" fill="#222"/><rect x="1079" y="148.3" width="2.2" height="2.2" fill="#222"/><rect x="1079" y="152.6" width="2.2" height="2.2" fill="#222"/><rect x="1079" y="156.9" width="2.2" height="2.2" fill="#222"/><text x="1356" y="154.5" font-family="Liberation Sans" font-size="11" fill="#222" font-weight="normal" font-style="normal" text-anchor="start">?</text><path d="M1374 146 L1382 154 M1382 146 L1374 154" stroke="#222" stroke-width="1.1"/><rect x="1400" y="146.0" width="10" height="1.1" fill="#222"/><rect x="1400" y="149.3" width="10" height="1.1" fill="#222"/><rect x="1400" y="152.6" width="10" height="1.1" fill="#222"/><path d="M1372 174 V180 H1363 V171 H1369 M1365.5 173.5 L1371 179 M1371 175 V179 H1367" fill="none" stroke="#333" stroke-width="1"/><path d="M1372 238 V244 H1363 V235 H1369 M1365.5 237.5 L1371 243 M1371 239 V243 H1367" fill="none" stroke="#333" stroke-width="1"/><path d="M1372 362 V368 H1363 V359 H1369 M1365.5 361.5 L1371 367 M1371 363 V367 H1367" fill="none" stroke="#333" stroke-width="1"/><g transform="translate(1311.5,199)"><path d="M4 8 V3 Q4 0.7 6 0.7 Q8 0.7 8 3 V8" fill="#fff" stroke="#3b3b3b" stroke-width="1.1"/><rect x="1.5" y="7.8" width="9" height="3.2" fill="#fff" stroke="#3b3b3b" stroke-width="1.1"/><path d="M1.2 11 H10.8 L11.8 15.5 H0.2Z" fill="#f9c071" stroke="#f08a2c" stroke-width="1"/></g><g transform="translate(1335,199)"><path d="M0.8 15 L7 0.8 L9 11 M3.5 10 H8.5" fill="none" stroke="#3b3b3b" stroke-width="1.2" stroke-linecap="round"/><path d="M15 9.5 A4 4 0 0 0 8.5 8.5 M8.5 6.5 V9 H11 M8.5 12.5 A4 4 0 0 0 15 13.5 M15 15.5 V13 H12.5" fill="none" stroke="#2b87d3" stroke-width="1.2"/></g><g transform="translate(1360,199)"><path d="M0.8 15 L7 0.8 L9 11 M3.5 10 H8.5" fill="none" stroke="#3b3b3b" stroke-width="1.2" stroke-linecap="round"/><circle cx="12" cy="11" r="2" fill="none" stroke="#f08a2c"/><path d="M15.00 11.00 L16.80 11.00" stroke="#f08a2c" stroke-width="1"/><path d="M9.00 11.00 L7.20 11.00" stroke="#f08a2c" stroke-width="1"/><path d="M12.00 14.00 L12.00 15.80" stroke="#f08a2c" stroke-width="1"/><path d="M12.00 8.00 L12.00 6.20" stroke="#f08a2c" stroke-width="1"/><path d="M14.10 13.10 L15.36 14.36" stroke="#f08a2c" stroke-width="1"/><path d="M9.90 13.10 L8.64 14.36" stroke="#f08a2c" stroke-width="1"/><path d="M14.10 8.90 L15.36 7.64" stroke="#f08a2c" stroke-width="1"/><path d="M9.90 8.90 L8.64 7.64" stroke="#f08a2c" stroke-width="1"/></g><text transform="matrix(0.16230 0 0 0.18551 1090.864 308.500)" font-family="Liberation Sans" font-weight="bold" font-style="normal" font-size="100" fill="#3b3b3b">B</text><text transform="matrix(0.16757 0 0 0.19692 1118.700 308.500)" font-family="Liberation Serif" font-weight="normal" font-style="italic" font-size="100" fill="#3b3b3b">I</text><text transform="matrix(0.16429 0 0 0.18143 1138.486 308.219)" font-family="Liberation Sans" font-weight="normal" font-style="normal" font-size="100" fill="#3b3b3b">U</text><rect x="1138" y="309.1" width="13" height="1.1" fill="#2b87d3"/><path d="M1160.7 302.3 h7 l-3.5 4z" fill="#111"/><text transform="matrix(0.14516 0 0 0.18028 1178.065 308.320)" font-family="Liberation Sans" font-weight="normal" font-style="italic" font-size="100" fill="#3b3b3b">S</text><rect x="1175.8" y="302" width="14.2" height="1.1" fill="#2b87d3"/><text transform="matrix(0.13226 0 0 0.18028 1203.203 308.320)" font-family="Liberation Sans" font-weight="normal" font-style="italic" font-size="100" fill="#3b3b3b">S</text><path d="M1208.5 298 Q1213.5 298.5 1212 303 Q1214.5 305 1213 308 Q1211 310.5 1208 309" fill="none" stroke="#2b87d3" stroke-width="1.2"/><g transform="translate(1303.5,294)"><path d="M0.8 14.5 L7.5 0.8 L9.5 9.5 M3.5 9.8 H9" fill="none" stroke="#3b3b3b" stroke-width="1.2" stroke-linecap="round"/><rect x="0" y="15.2" width="7" height="1" fill="#3b3b3b"/><path d="M6.5 13.5 L12.5 7.5 L16.5 11.5 L10.5 17.5Z" fill="#f25f63" stroke="#c92027" stroke-width="1"/><path d="M8.5 15.5 L14.5 9.5" stroke="#c92027" stroke-width="0.9"/></g><text transform="matrix(0.16818 0 0 0.19420 1337.300 308.700)" font-family="Liberation Sans" font-weight="normal" font-style="normal" font-size="100" fill="#3b3b3b">A</text><path d="M1347.5 300.7 V294.3 M1344.3 297.5 L1347.5 294.3 L1350.7 297.5" fill="none" stroke="#2b87d3" stroke-width="1.1"/><text transform="matrix(0.14242 0 0 0.16522 1362.300 308.700)" font-family="Liberation Sans" font-weight="normal" font-style="normal" font-size="100" fill="#3b3b3b">A</text><path d="M1372.5 294.1 V300.5 M1369.3 297.3 L1372.5 300.5 L1375.7 297.3" fill="none" stroke="#2b87d3" stroke-width="1.1"/><text transform="matrix(0.14697 0 0 0.16232 1090.200 335.400)" font-family="Liberation Sans" font-weight="normal" font-style="normal" font-size="100" fill="#3b3b3b">A</text><rect x="1086.9" y="336.1" width="16.1" height="3.8" fill="#c9211e"/><path d="M1110.7 332 h7 l-3.5 4z" fill="#111"/><text transform="matrix(0.07961 0 0 0.08108 1128.682 332.019)" font-family="Liberation Sans" font-weight="normal" font-style="normal" font-size="100" fill="#444">ab</text><path d="M1135 333 L1142.5 325.5 Q1143.5 324.5 1144.5 325.5 Q1145.5 326.5 1144.5 327.5 L1137 335Z" fill="#fff" stroke="#3b3b3b" stroke-width="0.9"/><path d="M1133 336 L1135.5 333 L1138 336Z" fill="#3b3b3b"/><rect x="1129" y="336.1" width="16" height="3.8" fill="#fff200"/><path d="M1152.7 332 h7 l-3.5 4z" fill="#111"/><text transform="matrix(0.12080 0 0 0.13333 1171.500 333.400)" font-family="Liberation Sans" font-weight="normal" font-style="normal" font-size="100" fill="#3b3b3b">AV</text><path d="M1171.5 336.5 H1186.5 M1174.5 333.5 L1171.5 336.5 L1174.5 339.5 M1183.5 333.5 L1186.5 336.5 L1183.5 339.5" fill="none" stroke="#2b87d3" stroke-width="1.1"/><path d="M1194.7 332 h7 l-3.5 4z" fill="#111"/><path d="M1210.5 326 L1223.5 338.5 M1223.5 326 L1210.5 338.5" stroke="#b5b5b5" stroke-width="1.2"/><text transform="matrix(0.12621 0 0 0.10676 1304.595 332.193)" font-family="Liberation Sans" font-weight="normal" font-style="normal" font-size="100" fill="#3b3b3b">ab</text><text transform="matrix(0.11395 0 0 0.10364 1304.844 339.496)" font-family="Liberation Sans" font-weight="normal" font-style="normal" font-size="100" fill="#3b3b3b">c</text><path d="M1319.8 332 Q1320.5 336.4 1316 336.4 H1311.8 M1314.3 333.9 L1311.8 336.4 L1314.3 338.9" fill="none" stroke="#2b87d3" stroke-width="1.1"/><text transform="matrix(0.11875 0 0 0.14151 1337.181 335.700)" font-family="Liberation Sans" font-weight="normal" font-style="normal" font-size="100" fill="#3b3b3b">x</text><text transform="matrix(0.10204 0 0 0.09714 1343.694 332.600)" font-family="Liberation Sans" font-weight="bold" font-style="normal" font-size="100" fill="#2b87d3">2</text><text transform="matrix(0.12292 0 0 0.14151 1362.177 335.700)" font-family="Liberation Sans" font-weight="normal" font-style="normal" font-size="100" fill="#3b3b3b">x</text><text transform="matrix(0.11633 0 0 0.09429 1368.251 338.400)" font-family="Liberation Sans" font-weight="bold" font-style="normal" font-size="100" fill="#2b87d3">2</text><rect x="1090" y="389.00" width="14" height="1.2" fill="#3b3b3b"/><rect x="1090" y="391.50" width="10" height="1.2" fill="#3b3b3b"/><rect x="1090" y="394.00" width="14" height="1.2" fill="#3b3b3b"/><rect x="1090" y="396.50" width="10" height="1.2" fill="#3b3b3b"/><rect x="1090" y="399.00" width="14" height="1.2" fill="#3b3b3b"/><rect x="1090" y="401.50" width="10" height="1.2" fill="#3b3b3b"/><rect x="1115.0" y="389.00" width="14" height="1.2" fill="#3b3b3b"/><rect x="1117.0" y="391.50" width="10" height="1.2" fill="#3b3b3b"/><rect x="1115.0" y="394.00" width="14" height="1.2" fill="#3b3b3b"/><rect x="1117.0" y="396.50" width="10" height="1.2" fill="#3b3b3b"/><rect x="1115.0" y="399.00" width="14" height="1.2" fill="#3b3b3b"/><rect x="1117.0" y="401.50" width="10" height="1.2" fill="#3b3b3b"/><rect x="1140" y="389.00" width="14" height="1.2" fill="#3b3b3b"/><rect x="1144" y="391.50" width="10" height="1.2" fill="#3b3b3b"/><rect x="1140" y="394.00" width="14" height="1.2" fill="#3b3b3b"/><rect x="1144" y="396.50" width="10" height="1.2" fill="#3b3b3b"/><rect x="1140" y="399.00" width="14" height="1.2" fill="#3b3b3b"/><rect x="1144" y="401.50" width="10" height="1.2" fill="#3b3b3b"/><rect x="1165" y="389.00" width="14" height="1.2" fill="#3b3b3b"/><rect x="1165" y="391.50" width="14" height="1.2" fill="#3b3b3b"/><rect x="1165" y="394.00" width="14" height="1.2" fill="#3b3b3b"/><rect x="1165" y="396.50" width="14" height="1.2" fill="#3b3b3b"/><rect x="1165" y="399.00" width="14" height="1.2" fill="#3b3b3b"/><rect x="1165" y="401.50" width="14" height="1.2" fill="#3b3b3b"/><g transform="translate(1333,385)"><path d="M7 0.6 H5 Q2 0.6 2 4 Q2 7.5 7 7.5Z" fill="#cfcfcf" stroke="#3b3b3b" stroke-width="1"/><path d="M7.5 0.6 V18 M10.5 0.6 V18 M7 0.6 H16" stroke="#3b3b3b" stroke-width="1.2"/><path d="M0 13 H6.5 M3.5 10 L6.5 13 L3.5 16" fill="none" stroke="#2b87d3" stroke-width="1.2"/></g><g transform="translate(1360,385)"><path d="M5 0.6 H3 Q0.5 0.6 0.5 4 Q0.5 7.5 5 7.5Z" fill="#cfcfcf" stroke="#3b3b3b" stroke-width="1"/><path d="M5.5 0.6 V18 M8.5 0.6 V18 M5 0.6 H14" stroke="#3b3b3b" stroke-width="1.2"/><path d="M16 13 H9.5 M12.5 10 L9.5 13 L12.5 16" fill="none" stroke="#2b87d3" stroke-width="1.2"/></g><g transform="translate(1088,418)"><circle cx="1.5" cy="1.5" r="1.3" fill="#2b87d3"/><circle cx="1.5" cy="10" r="1.3" fill="#2b87d3"/><rect x="4.5" y="1" width="9" height="1.1" fill="#3b3b3b"/><rect x="4.5" y="4.5" width="6" height="1.1" fill="#3b3b3b"/><rect x="4.5" y="9.5" width="9" height="1.1" fill="#3b3b3b"/><rect x="4.5" y="13" width="6" height="1.1" fill="#3b3b3b"/></g><path d="M1110.5 425 h7 l-3.5 4z" fill="#111"/><g transform="translate(1123,418)"><text x="0" y="6.5" font-family="Liberation Sans" font-size="7" fill="#2b87d3" font-weight="normal" font-style="normal" text-anchor="start">1</text><text x="0" y="14" font-family="Liberation Sans" font-size="7" fill="#2b87d3" font-weight="normal" font-style="normal" text-anchor="start">2</text><rect x="5" y="1" width="10" height="1.1" fill="#3b3b3b"/><rect x="5" y="4.5" width="7" height="1.1" fill="#3b3b3b"/><rect x="5" y="9.5" width="10" height="1.1" fill="#3b3b3b"/><rect x="5" y="13" width="7" height="1.1" fill="#3b3b3b"/></g><path d="M1146.5 425 h7 l-3.5 4z" fill="#111"/><g transform="translate(1160,418)"><text x="0" y="6.5" font-family="Liberation Sans" font-size="7" fill="#2b87d3" font-weight="normal" font-style="normal" text-anchor="start">1</text><rect x="5" y="1" width="10" height="1.1" fill="#3b3b3b"/><rect x="5" y="4.5" width="7" height="1.1" fill="#3b3b3b"/><circle cx="5" cy="11" r="1.2" fill="#2b87d3"/><rect x="7.5" y="10.5" width="6" height="1.1" fill="#3b3b3b"/><rect x="8.5" y="13.8" width="2" height="1" fill="#3b3b3b"/></g><path d="M1182.5 425 h7 l-3.5 4z" fill="#111"/><g transform="translate(1283,417)"><path d="M0.5 12 Q1 6 5 5 L6 9 Q3 9 2 12Z" fill="#2b87d3"/><path d="M5.5 5 Q8 4 9.5 6 V2 Q9.5 0.5 11 0.5 Q12.5 0.5 12.5 2 V7 Q14 7.5 14 9.5 V12.5 L9 13 L5.5 9Z" fill="#fff" stroke="#3b3b3b" stroke-width="1"/></g><path d="M1370.5 425 h7 l-3.5 4z" fill="#111"/><g transform="translate(1090,494)"><rect x="0" y="1.5" width="7" height="1.2" fill="#3b3b3b"/><rect x="0" y="4" width="7" height="1.2" fill="#3b3b3b"/><rect x="0" y="10.5" width="7" height="1.2" fill="#3b3b3b"/><rect x="0" y="13" width="7" height="1.2" fill="#3b3b3b"/><path d="M11.5 0.5 V7 M8.8 3.2 L11.5 0.5 L14.2 3.2 M11.5 8 V14.5 M8.8 11.8 L11.5 14.5 L14.2 11.8" fill="none" stroke="#2b87d3" stroke-width="1.2"/></g><g transform="translate(1115,494)"><rect x="0" y="3" width="7" height="1.2" fill="#bbb"/><rect x="0" y="5.5" width="7" height="1.2" fill="#bbb"/><rect x="0" y="9" width="7" height="1.2" fill="#bbb"/><rect x="0" y="11.5" width="7" height="1.2" fill="#bbb"/><path d="M11.5 0 V6.5 M8.8 3.8 L11.5 6.5 L14.2 3.8 M11.5 8 V14.5 M8.8 10.7 L11.5 8 L14.2 10.7" fill="none" stroke="#bbb" stroke-width="1.2"/></g><g transform="translate(1090.5,524)"><path d="M4 0.5 H10 M7 0.5 V7.5 M4 7.5 H10" fill="none" stroke="#2b87d3" stroke-width="1.2"/><rect x="0" y="9.5" width="14.5" height="1.2" fill="#3b3b3b"/><rect x="0" y="12" width="14.5" height="1.2" fill="#3b3b3b"/></g><g transform="translate(1090.5,553)"><rect x="0" y="0.5" width="14.5" height="1.2" fill="#3b3b3b"/><rect x="0" y="3" width="14.5" height="1.2" fill="#3b3b3b"/><path d="M4 6 H10 M7 6 V13 M4 13 H10" fill="none" stroke="#2b87d3" stroke-width="1.2"/></g><g transform="translate(1090,581)"><path d="M3 0.5 V15 M0.5 3 L3 0.5 L5.5 3 M0.5 12.5 L3 15 L5.5 12.5" fill="none" stroke="#2b87d3" stroke-width="1.2"/><rect x="6" y="2.5" width="9" height="1.2" fill="#3b3b3b"/><rect x="6" y="5.5" width="9" height="1.2" fill="#3b3b3b"/><rect x="6" y="8.5" width="9" height="1.2" fill="#3b3b3b"/><rect x="6" y="11.5" width="9" height="1.2" fill="#3b3b3b"/></g><path d="M1114 589.5 h7 l-3.5 4z" fill="#111"/><rect x="1240" y="494.5" width="15" height="1.2" fill="#3b3b3b"/><rect x="1248" y="499.0" width="7" height="1.2" fill="#3b3b3b"/><rect x="1248" y="503.0" width="7" height="1.2" fill="#3b3b3b"/><rect x="1240" y="507.0" width="15" height="1.2" fill="#3b3b3b"/><path d="M1240 501.3 H1246 M1243 498.5 L1246 501.3 L1243 504.1" fill="none" stroke="#2b87d3" stroke-width="1.1"/><rect x="1265" y="494.5" width="15" height="1.2" fill="#3b3b3b"/><rect x="1273" y="499.0" width="7" height="1.2" fill="#3b3b3b"/><rect x="1273" y="503.0" width="7" height="1.2" fill="#3b3b3b"/><rect x="1265" y="507.0" width="15" height="1.2" fill="#3b3b3b"/><path d="M1271.5 501.3 H1265.5 M1268.5 498.5 L1265.5 501.3 L1268.5 504.1" fill="none" stroke="#2b87d3" stroke-width="1.1"/><rect x="1290" y="494.5" width="15" height="1.2" fill="#3b3b3b"/><rect x="1298" y="499.0" width="7" height="1.2" fill="#3b3b3b"/><rect x="1298" y="503.0" width="7" height="1.2" fill="#3b3b3b"/><rect x="1290" y="507.0" width="15" height="1.2" fill="#3b3b3b"/><path d="M1290 501.3 H1296 M1293 498.5 L1296 501.3 L1293 504.1" fill="none" stroke="#2b87d3" stroke-width="1.1"/><g transform="translate(1240.5,525.5)"><path d="M0.5 2.5 V8 M0.5 5.3 H6.5 M6.5 2.5 V8" fill="none" stroke="#2b87d3" stroke-width="1.2"/><rect x="2" y="0" width="14" height="1.2" fill="#3b3b3b"/><rect x="8.5" y="4.6" width="7.5" height="1.2" fill="#3b3b3b"/><rect x="2" y="9.5" width="14" height="1.2" fill="#3b3b3b"/></g><g transform="translate(1240.5,554.5)"><rect x="0" y="0" width="14" height="1.2" fill="#3b3b3b"/><rect x="0" y="4.6" width="7.5" height="1.2" fill="#3b3b3b"/><rect x="0" y="9.5" width="14" height="1.2" fill="#3b3b3b"/><path d="M9.5 2.5 V8 M9.5 5.3 H15.5 M15.5 2.5 V8" fill="none" stroke="#2b87d3" stroke-width="1.2"/></g><g transform="translate(1240.5,582)"><path d="M0.5 0 V5 M0.5 2.5 H6.5 M6.5 0 V5" fill="none" stroke="#2b87d3" stroke-width="1.2"/><rect x="8.5" y="2" width="6" height="1.2" fill="#3b3b3b"/><rect x="0.5" y="6.5" width="14" height="1.2" fill="#3b3b3b"/><rect x="0.5" y="9.5" width="14" height="1.2" fill="#3b3b3b"/><rect x="0.5" y="12.5" width="9" height="1.2" fill="#3b3b3b"/></g><text x="1207.5" y="621" font-family="Liberation Sans" font-size="11" fill="#3b3b3b" font-weight="normal" font-style="normal" text-anchor="start">ab</text><text x="1207.5" y="628.5" font-family="Liberation Sans" font-size="9" fill="#3b3b3b" font-weight="normal" font-style="normal" text-anchor="start">c</text><path d="M1222.5 620 Q1222.5 625.5 1217 625.5 H1212.5 M1215 623 L1212.5 625.5 L1215 628" fill="none" stroke="#2b87d3" stroke-width="1.1"/><g transform="translate(1395,170)"><rect x="0.6" y="0.6" width="19" height="19" fill="#fff" stroke="#3b3b3b" stroke-width="1.2"/><rect x="0.6" y="0.6" width="19" height="3" fill="#3b3b3b"/><rect x="3.5" y="9" width="13" height="1" fill="#3b3b3b"/><rect x="3.5" y="13.5" width="13" height="1" fill="#3b3b3b"/><circle cx="11.5" cy="9.5" r="1.5" fill="#2b87d3"/><circle cx="7" cy="14" r="1.5" fill="#fff" stroke="#2b87d3"/></g><g transform="translate(1395,205)"><path d="M0.8 19.5 L7 2 L11 16 M3.5 13 H10" fill="none" stroke="#3b3b3b" stroke-width="1.4"/><path d="M10 16 L18.5 8.5 Q20.5 8 19.5 10 L12.5 18" fill="#fff" stroke="#3b3b3b" stroke-width="1"/><path d="M6 21 Q7.5 17 11 16.5 Q12.8 18 11.2 19.5 Q9 21.5 6 21Z" fill="#7ab6ec" stroke="#1e6ebf" stroke-width="1.1"/></g><g transform="translate(1394,240)"><path d="M0.7 17.5 V0.7 H6 L8 2.5 H19 V5" fill="#fff" stroke="#f08a2c" stroke-width="1.2"/><path d="M0.7 17.5 L3 5.5 H22.5 L20 17.5Z" fill="#f7d98d" stroke="#f08a2c" stroke-width="1.2"/><rect x="8.3" y="7.2" width="12.5" height="12.5" fill="#fff" stroke="#3b3b3b" stroke-width="1.2"/><circle cx="11.5" cy="10.5" r="1.2" fill="none" stroke="#f08a2c"/><path d="M9 19 L12.5 15 L14 16.5 L17 13 L20.5 17 V19.5 H9Z" fill="#7ab6ec" stroke="#1e6ebf" stroke-width="0.9"/></g><g transform="translate(1395,275)"><circle cx="10" cy="10" r="9.4" fill="#fff" stroke="#3b3b3b" stroke-width="1.2"/><path d="M15.5 4.5 L12 12 L4.5 15.5 L8 8Z" fill="#2b87d3"/><circle cx="10" cy="10" r="1.6" fill="#fff"/></g><g transform="translate(1397,310)"><path d="M0.6 0.6 H11.1 L15.6 5.1 V19.6 H0.6Z M11.1 0.6 V5.1 H15.6" fill="#fff" stroke="#3b3b3b" stroke-width="1.2" stroke-linejoin="round"/></g><g transform="translate(1395,347)"><path d="M0.5 6.5 Q6 0.5 13 4 M3.5 4 Q1.5 9 6.5 10.5" fill="none" stroke="#3b3b3b" stroke-width="1.2"/><circle cx="7.5" cy="6.5" r="3" fill="#fff" stroke="#3b3b3b" stroke-width="1.1"/><circle cx="7.5" cy="6.5" r="1.5" fill="#2b87d3"/><path d="M11 14 L19 6 Q21 5.5 20 7.5 L13 16" fill="#fff" stroke="#3b3b3b" stroke-width="1"/><path d="M6 19 Q7.5 15 11 14.5 Q12.8 16 11.2 17.5 Q9 19.5 6 19Z" fill="#7ab6ec" stroke="#1e6ebf" stroke-width="1.1"/></g><g transform="translate(1397,380)"><path d="M0.6 0.6 H11.1 L15.6 5.1 V19.6 H0.6Z M11.1 0.6 V5.1 H15.6" fill="#fff" stroke="#3b3b3b" stroke-width="1.2" stroke-linejoin="round"/><rect x="3" y="5" width="6" height="1" fill="#666"/><rect x="3" y="8" width="8" height="1.1" fill="#f08a2c"/><rect x="3" y="11" width="7" height="1.1" fill="#666"/><rect x="3" y="14" width="3" height="1.1" fill="#f08a2c"/><path d="M7 20.5 L7.8 17 L16 8.8 L18.7 11.5 L10.5 19.7Z" fill="#4d9de0" stroke="#1e6ebf" stroke-width="1.1" stroke-linejoin="round"/></g><g transform="translate(1397,415)"><path d="M0.6 0.6 H11.1 L15.6 5.1 V19.6 H0.6Z M11.1 0.6 V5.1 H15.6" fill="#fff" stroke="#3b3b3b" stroke-width="1.2" stroke-linejoin="round"/><circle cx="13" cy="9.5" r="1.7" fill="#fff" stroke="#2b87d3" stroke-width="1.2"/><path d="M7.5 12.5 H18.5 M10 12.5 V21.5 H12.5 V17 H13.5 V21.5 H16 V12.5" fill="#fff" stroke="#2b87d3" stroke-width="1.3"/></g><g transform="translate(1395,450)"><circle cx="12" cy="7.8" r="7" fill="#fff" stroke="#2b87d3" stroke-width="1.5"/><path d="M7 12.8 L1 19" stroke="#2b87d3" stroke-width="2.2" stroke-linecap="round"/></g><g transform="translate(10.5,1012.5)"><path d="M0.6 0.6 H15.4 V14.4 H2.5 L0.6 12.5Z" fill="#fff" stroke="#d02a20" stroke-width="1.2"/><rect x="3.5" y="0.6" width="9" height="4.5" fill="none" stroke="#d02a20" stroke-width="1.2"/><rect x="3.5" y="8.5" width="9" height="5.9" fill="none" stroke="#d02a20" stroke-width="1.2"/><rect x="5" y="11" width="2" height="3.5" fill="#d02a20"/></g><rect x="945" y="1016.5" width="17" height="9" fill="none" stroke="#2b87d3" stroke-width="1.2"/><path d="M966 1014.5 H972.5 M969.2 1014.5 V1027.5 M966 1027.5 H972.5" fill="none" stroke="#333" stroke-width="1.2"/><path d="M1155 1013 H1163.5 L1167 1016.5 V1028.5 H1155Z" fill="#1565c0"/><path d="M1173.6 1013.6 H1181 L1184.5 1017 V1028 H1173.6Z M1186 1013.6 H1194 L1197.6 1017 V1028 H1186Z" fill="#fff" stroke="#333" stroke-width="1.1"/><path d="M1216 1013.6 H1208 L1204.6 1017 V1028 H1216Z M1216 1013.6 H1224 L1227.6 1017 V1028 H1216Z" fill="#fff" stroke="#333" stroke-width="1.1"/><rect x="1244" y="1020.6" width="10" height="1.8" fill="#222"/><rect x="1259" y="1021" width="98" height="1" fill="#555"/><rect x="1290" y="1018.5" width="1" height="6" fill="#555"/><rect x="1307.5" y="1016.5" width="4.5" height="9" fill="#f4f4f4" stroke="#444" stroke-width="1"/><rect x="1362" y="1020.6" width="10" height="1.8" fill="#222"/><rect x="1366.1" y="1016.5" width="1.8" height="10" fill="#222"/><rect x="50.2" y="144" width="1" height="4.5" fill="#888"/><text x="75.30000000000001" y="150.3" font-family="Liberation Sans" font-size="8.5" fill="#7c7c7c" font-weight="normal" font-style="normal" text-anchor="middle">1</text><rect x="99.4" y="144" width="1" height="4.5" fill="#888"/><rect x="148.5" y="144" width="1" height="4.5" fill="#888"/><text x="173.5" y="150.3" font-family="Liberation Sans" font-size="8.5" fill="#7c7c7c" font-weight="normal" font-style="normal" text-anchor="middle">1</text><rect x="197.6" y="144" width="1" height="4.5" fill="#888"/><text x="222.60000000000002" y="150.3" font-family="Liberation Sans" font-size="8.5" fill="#7c7c7c" font-weight="normal" font-style="normal" text-anchor="middle">2</text><rect x="246.7" y="144" width="1" height="4.5" fill="#888"/><text x="271.70000000000005" y="150.3" font-family="Liberation Sans" font-size="8.5" fill="#7c7c7c" font-weight="normal" font-style="normal" text-anchor="middle">3</text><rect x="295.8" y="144" width="1" height="4.5" fill="#888"/><text x="320.8" y="150.3" font-family="Liberation Sans" font-size="8.5" fill="#7c7c7c" font-weight="normal" font-style="normal" text-anchor="middle">4</text><rect x="344.9" y="144" width="1" height="4.5" fill="#888"/><text x="369.9" y="150.3" font-family="Liberation Sans" font-size="8.5" fill="#7c7c7c" font-weight="normal" font-style="normal" text-anchor="middle">5</text><rect x="394.0" y="144" width="1" height="4.5" fill="#888"/><text x="419.0" y="150.3" font-family="Liberation Sans" font-size="8.5" fill="#7c7c7c" font-weight="normal" font-style="normal" text-anchor="middle">6</text><rect x="443.1" y="144" width="1" height="4.5" fill="#888"/><text x="468.1" y="150.3" font-family="Liberation Sans" font-size="8.5" fill="#7c7c7c" font-weight="normal" font-style="normal" text-anchor="middle">7</text><rect x="492.1" y="144" width="1" height="4.5" fill="#888"/><text x="517.2" y="150.3" font-family="Liberation Sans" font-size="8.5" fill="#7c7c7c" font-weight="normal" font-style="normal" text-anchor="middle">8</text><rect x="541.2" y="144" width="1" height="4.5" fill="#888"/><text x="566.3000000000001" y="150.3" font-family="Liberation Sans" font-size="8.5" fill="#7c7c7c" font-weight="normal" font-style="normal" text-anchor="middle">9</text><rect x="590.4" y="144" width="1" height="4.5" fill="#888"/><text x="615.4" y="150.3" font-family="Liberation Sans" font-size="8.5" fill="#7c7c7c" font-weight="normal" font-style="normal" text-anchor="middle">10</text><rect x="639.5" y="144" width="1" height="4.5" fill="#888"/><text x="664.5" y="150.3" font-family="Liberation Sans" font-size="8.5" fill="#7c7c7c" font-weight="normal" font-style="normal" text-anchor="middle">11</text><rect x="688.5" y="144" width="1" height="4.5" fill="#888"/><text x="713.6" y="150.3" font-family="Liberation Sans" font-size="8.5" fill="#7c7c7c" font-weight="normal" font-style="normal" text-anchor="middle">12</text><rect x="737.6" y="144" width="1" height="4.5" fill="#888"/><text x="762.7" y="150.3" font-family="Liberation Sans" font-size="8.5" fill="#7c7c7c" font-weight="normal" font-style="normal" text-anchor="middle">13</text><rect x="786.8" y="144" width="1" height="4.5" fill="#888"/><text x="811.8" y="150.3" font-family="Liberation Sans" font-size="8.5" fill="#7c7c7c" font-weight="normal" font-style="normal" text-anchor="middle">14</text><rect x="835.9" y="144" width="1" height="4.5" fill="#888"/><text x="860.9" y="150.3" font-family="Liberation Sans" font-size="8.5" fill="#7c7c7c" font-weight="normal" font-style="normal" text-anchor="middle">15</text><rect x="885.0" y="144" width="1" height="4.5" fill="#888"/><text x="910.0" y="150.3" font-family="Liberation Sans" font-size="8.5" fill="#7c7c7c" font-weight="normal" font-style="normal" text-anchor="middle">16</text><rect x="934.0" y="144" width="1" height="4.5" fill="#888"/><text x="959.1" y="150.3" font-family="Liberation Sans" font-size="8.5" fill="#7c7c7c" font-weight="normal" font-style="normal" text-anchor="middle">17</text><rect x="983.1" y="144" width="1" height="4.5" fill="#888"/><text x="1008.2" y="150.3" font-family="Liberation Sans" font-size="8.5" fill="#7c7c7c" font-weight="normal" font-style="normal" text-anchor="middle">18</text><rect x="1032.2" y="144" width="1" height="4.5" fill="#888"/><path d="M183.5 155.5 H189.5 M186.5 151 V155.5" stroke="#333" stroke-width="1"/><path d="M244.5 155.5 H250.5 M247.5 151 V155.5" stroke="#333" stroke-width="1"/><path d="M306.5 155.5 H312.5 M309.5 151 V155.5" stroke="#333" stroke-width="1"/><path d="M367.5 155.5 H373.5 M370.5 151 V155.5" stroke="#333" stroke-width="1"/><path d="M428.5 155.5 H434.5 M431.5 151 V155.5" stroke="#333" stroke-width="1"/><path d="M490.5 155.5 H496.5 M493.5 151 V155.5" stroke="#333" stroke-width="1"/><path d="M551.5 155.5 H557.5 M554.5 151 V155.5" stroke="#333" stroke-width="1"/><path d="M612.5 155.5 H618.5 M615.5 151 V155.5" stroke="#333" stroke-width="1"/><path d="M674.5 155.5 H680.5 M677.5 151 V155.5" stroke="#333" stroke-width="1"/><path d="M735.5 155.5 H741.5 M738.5 151 V155.5" stroke="#333" stroke-width="1"/><path d="M797.5 155.5 H803.5 M800.5 151 V155.5" stroke="#333" stroke-width="1"/><path d="M858.5 155.5 H864.5 M861.5 151 V155.5" stroke="#333" stroke-width="1"/><path d="M919.5 155.5 H925.5 M922.5 151 V155.5" stroke="#333" stroke-width="1"/><path d="M174.5 139 V141 M174.5 154 V156" stroke="#9a9a9a" stroke-width="1"/><path d="M223.5 139 V141 M223.5 154 V156" stroke="#9a9a9a" stroke-width="1"/><path d="M272.5 139 V141 M272.5 154 V156" stroke="#9a9a9a" stroke-width="1"/><path d="M321.5 139 V141 M321.5 154 V156" stroke="#9a9a9a" stroke-width="1"/><path d="M370.5 139 V141 M370.5 154 V156" stroke="#9a9a9a" stroke-width="1"/><path d="M419.5 139 V141 M419.5 154 V156" stroke="#9a9a9a" stroke-width="1"/><path d="M468.5 139 V141 M468.5 154 V156" stroke="#9a9a9a" stroke-width="1"/><path d="M517.5 139 V141 M517.5 154 V156" stroke="#9a9a9a" stroke-width="1"/><path d="M566.5 139 V141 M566.5 154 V156" stroke="#9a9a9a" stroke-width="1"/><path d="M615.5 139 V141 M615.5 154 V156" stroke="#9a9a9a" stroke-width="1"/><path d="M664.5 139 V141 M664.5 154 V156" stroke="#9a9a9a" stroke-width="1"/><path d="M714.5 139 V141 M714.5 154 V156" stroke="#9a9a9a" stroke-width="1"/><path d="M763.5 139 V141 M763.5 154 V156" stroke="#9a9a9a" stroke-width="1"/><path d="M812.5 139 V141 M812.5 154 V156" stroke="#9a9a9a" stroke-width="1"/><path d="M861.5 139 V141 M861.5 154 V156" stroke="#9a9a9a" stroke-width="1"/><path d="M910.5 139 V141 M910.5 154 V156" stroke="#9a9a9a" stroke-width="1"/><path d="M119 139.8 H129.5 V141.5 L124.25 147.5 L119 141.5Z M119 155.5 H129.5 V153.8 L124.25 147.8 L119 153.8Z" fill="#fff" stroke="#555" stroke-width="1"/><path d="M953.8 155.5 H964.3 V153.8 L959 147.8 L953.8 153.8Z" fill="#fff" stroke="#555" stroke-width="1"/><path d="M10.5 144 V150.5 H16.5" fill="none" stroke="#555" stroke-width="1.6"/></svg>
<div class="a" style="left:281px;top:56px;width:296px;height:698px;background:#f9f9f9;border:1px solid #a0a0a0"></div><div class="a" style="left:284px;top:211px;width:290px;height:24px;background:#99ccf8"></div><div class="a" style="left:316px;top:133px;width:258px;height:1px;background:#d7d7d7"></div><div class="a" style="left:316px;top:209px;width:258px;height:1px;background:#d7d7d7"></div><div class="a" style="left:316px;top:333px;width:258px;height:1px;background:#d7d7d7"></div><div class="a" style="left:316px;top:505px;width:258px;height:1px;background:#d7d7d7"></div><div class="a" style="left:316px;top:629px;width:258px;height:1px;background:#d7d7d7"></div><svg style="left:561px;top:66.5px" width="5" height="9"><path d="M0 0 L4.5 4.5 L0 9Z" fill="#000"/></svg><svg style="left:561px;top:90.5px" width="5" height="9"><path d="M0 0 L4.5 4.5 L0 9Z" fill="#000"/></svg><svg style="left:561px;top:114.5px" width="5" height="9"><path d="M0 0 L4.5 4.5 L0 9Z" fill="#000"/></svg><svg style="left:561px;top:190.5px" width="5" height="9"><path d="M0 0 L4.5 4.5 L0 9Z" fill="#000"/></svg><svg style="left:561px;top:266.5px" width="5" height="9"><path d="M0 0 L4.5 4.5 L0 9Z" fill="#000"/></svg><svg style="left:561px;top:514.5px" width="5" height="9"><path d="M0 0 L4.5 4.5 L0 9Z" fill="#a0a0a0"/></svg><svg style="left:561px;top:538.5px" width="5" height="9"><path d="M0 0 L4.5 4.5 L0 9Z" fill="#a0a0a0"/></svg><svg style="left:561px;top:562.5px" width="5" height="9"><path d="M0 0 L4.5 4.5 L0 9Z" fill="#a0a0a0"/></svg><svg style="left:561px;top:638.5px" width="5" height="9"><path d="M0 0 L4.5 4.5 L0 9Z" fill="#a0a0a0"/></svg><svg style="left:561px;top:662.5px" width="5" height="9"><path d="M0 0 L4.5 4.5 L0 9Z" fill="#a0a0a0"/></svg><svg style="left:561px;top:686.5px" width="5" height="9"><path d="M0 0 L4.5 4.5 L0 9Z" fill="#a0a0a0"/></svg><svg style="left:561px;top:710.5px" width="5" height="9"><path d="M0 0 L4.5 4.5 L0 9Z" fill="#a0a0a0"/></svg><svg style="left:561px;top:734.5px" width="5" height="9"><path d="M0 0 L4.5 4.5 L0 9Z" fill="#a0a0a0"/></svg>
<svg style="left:0;top:0" width="1426" height="1032" viewBox="0 0 1426 1032"><text transform="matrix(0.17273 0 0 0.19710 295.300 77.900)" font-family="Liberation Sans" font-weight="normal" font-style="normal" font-size="100" fill="#333">A</text><g transform="translate(293,87)"><path d="M3 1 V15 M0.5 3.5 L3 1 L5.5 3.5 M0.5 12.5 L3 15 L5.5 12.5" fill="none" stroke="#2b87d3" stroke-width="1.1"/><rect x="7" y="3" width="9" height="1.1" fill="#3b3b3b"/><rect x="7" y="6" width="9" height="1.1" fill="#3b3b3b"/><rect x="7" y="9" width="9" height="1.1" fill="#3b3b3b"/><rect x="7" y="12" width="9" height="1.1" fill="#3b3b3b"/></g><rect x="294" y="112.5" width="13" height="1.2" fill="#3b3b3b"/><rect x="294" y="115.5" width="13" height="1.2" fill="#3b3b3b"/><rect x="294" y="118.5" width="13" height="1.2" fill="#3b3b3b"/><rect x="294" y="121.5" width="13" height="1.2" fill="#3b3b3b"/><rect x="294" y="124.5" width="13" height="1.2" fill="#3b3b3b"/><g transform="translate(294.5,139)"><path d="M4 8 V3 Q4 0.7 6 0.7 Q8 0.7 8 3 V8" fill="#fff" stroke="#3b3b3b" stroke-width="1.1"/><rect x="1.5" y="7.8" width="9" height="3.2" fill="#fff" stroke="#3b3b3b" stroke-width="1.1"/><path d="M1.2 11 H10.8 L11.8 15.5 H0.2Z" fill="#f9c071" stroke="#f08a2c" stroke-width="1"/><path d="M2 13.2 L10 12.5" stroke="#fff" stroke-width="0.9"/></g><g transform="translate(293,163)"><path d="M0.8 14 L6.5 1 L8.5 9 M3 9.5 H8" fill="none" stroke="#3b3b3b" stroke-width="1.2" stroke-linecap="round"/><rect x="0" y="15" width="6.5" height="1" fill="#3b3b3b"/><path d="M5.5 13.5 L11.5 7.5 L15.5 11.5 L9.5 17.5Z" fill="#f25f63" stroke="#c92027" stroke-width="1"/><path d="M7.5 15.5 L13.5 9.5" stroke="#c92027" stroke-width="1"/></g><g transform="translate(294.5,216)"><path d="M0.8 13.5 L6.8 0.8 L8.2 8.5 M3.2 9 H8" fill="none" stroke="#3b3b3b" stroke-width="1.3" stroke-linecap="round"/><polygon points="14.46,9.56 14.46,10.44 12.92,10.88 12.69,11.44 13.46,12.84 12.84,13.46 11.44,12.69 10.88,12.92 10.44,14.46 9.56,14.46 9.12,12.92 8.56,12.69 7.16,13.46 6.54,12.84 7.31,11.44 7.08,10.88 5.54,10.44 5.54,9.56 7.08,9.12 7.31,8.56 6.54,7.16 7.16,6.54 8.56,7.31 9.12,7.08 9.56,5.54 10.44,5.54 10.88,7.08 11.44,7.31 12.84,6.54 13.46,7.16 12.69,8.56 12.92,9.12" fill="#fff" stroke="#2b87d3" stroke-width="1.05" stroke-linejoin="round"/><circle cx="10" cy="10" r="1.34" fill="none" stroke="#2b87d3" stroke-width="1"/></g><g transform="translate(293,239)"><path d="M5 0.6 H3 Q0.5 0.6 0.5 4 Q0.5 7.5 5 7.5Z" fill="#cfcfcf" stroke="#3b3b3b" stroke-width="1"/><path d="M5.5 0.6 V16 M8 0.6 V8 M5 0.6 H12" stroke="#3b3b3b" stroke-width="1.2"/><polygon points="15.96,11.06 15.96,11.94 14.42,12.38 14.19,12.94 14.96,14.34 14.34,14.96 12.94,14.19 12.38,14.42 11.94,15.96 11.06,15.96 10.62,14.42 10.06,14.19 8.66,14.96 8.04,14.34 8.81,12.94 8.58,12.38 7.04,11.94 7.04,11.06 8.58,10.62 8.81,10.06 8.04,8.66 8.66,8.04 10.06,8.81 10.62,8.58 11.06,7.04 11.94,7.04 12.38,8.58 12.94,8.81 14.34,8.04 14.96,8.66 14.19,10.06 14.42,10.62" fill="#fff" stroke="#2b87d3" stroke-width="1.05" stroke-linejoin="round"/><circle cx="11.5" cy="11.5" r="1.34" fill="none" stroke="#2b87d3" stroke-width="1"/></g><g transform="translate(294,264)"><circle cx="1.5" cy="1.8" r="1.3" fill="#2b87d3"/><circle cx="1.5" cy="10.3" r="1.3" fill="#2b87d3"/><rect x="5" y="1" width="10" height="1.1" fill="#3b3b3b"/><rect x="5" y="5" width="7" height="1.1" fill="#3b3b3b"/><rect x="5" y="9.5" width="10" height="1.1" fill="#3b3b3b"/><rect x="5" y="13.5" width="7" height="1.1" fill="#3b3b3b"/></g><g transform="translate(294,288)"><circle cx="1.5" cy="1.8" r="1.3" fill="#2b87d3"/><circle cx="1.5" cy="10.3" r="1.3" fill="#2b87d3"/><rect x="5" y="1" width="10" height="1.1" fill="#3b3b3b"/><rect x="5" y="5" width="5" height="1.1" fill="#3b3b3b"/><rect x="5" y="9.5" width="3" height="1.1" fill="#3b3b3b"/><polygon points="15.96,10.56 15.96,11.44 14.42,11.88 14.19,12.44 14.96,13.84 14.34,14.46 12.94,13.69 12.38,13.92 11.94,15.46 11.06,15.46 10.62,13.92 10.06,13.69 8.66,14.46 8.04,13.84 8.81,12.44 8.58,11.88 7.04,11.44 7.04,10.56 8.58,10.12 8.81,9.56 8.04,8.16 8.66,7.54 10.06,8.31 10.62,8.08 11.06,6.54 11.94,6.54 12.38,8.08 12.94,8.31 14.34,7.54 14.96,8.16 14.19,9.56 14.42,10.12" fill="#fff" stroke="#2b87d3" stroke-width="1.05" stroke-linejoin="round"/><circle cx="11.5" cy="11" r="1.34" fill="none" stroke="#2b87d3" stroke-width="1"/></g><g transform="translate(295,339)"><path d="M0.5 0.5 H8.5 L12.0 4.0 V15.5 H0.5Z M8.5 0.5 V4.0 H12.0" fill="#fff" stroke="#3b3b3b" stroke-width="1.1" stroke-linejoin="round"/><polygon points="15.46,11.56 15.46,12.44 13.92,12.88 13.69,13.44 14.46,14.84 13.84,15.46 12.44,14.69 11.88,14.92 11.44,16.46 10.56,16.46 10.12,14.92 9.56,14.69 8.16,15.46 7.54,14.84 8.31,13.44 8.08,12.88 6.54,12.44 6.54,11.56 8.08,11.12 8.31,10.56 7.54,9.16 8.16,8.54 9.56,9.31 10.12,9.08 10.56,7.54 11.44,7.54 11.88,9.08 12.44,9.31 13.84,8.54 14.46,9.16 13.69,10.56 13.92,11.12" fill="#fff" stroke="#2b87d3" stroke-width="1.05" stroke-linejoin="round"/><circle cx="11" cy="12" r="1.34" fill="none" stroke="#2b87d3" stroke-width="1"/></g><g transform="translate(295,363)"><path d="M0 0 H8.5 L12 3.5 V15.5 H0Z" fill="#2a86d8" stroke="#1f5f9a" stroke-width="0.8"/><path d="M8.5 0 V3.5 H12" fill="#cfe6fa"/><rect x="3" y="7.5" width="6" height="2" fill="#fff"/></g><g transform="translate(295,435)"><rect x="0.5" y="0.5" width="12" height="15" fill="#fff" stroke="#3b3b3b" stroke-width="1.1"/><rect x="2.5" y="3.0" width="3.3" height="1" fill="#2b87d3"/><rect x="7.2" y="3.0" width="3.3" height="1" fill="#2b87d3"/><rect x="2.5" y="5.8" width="3.3" height="1" fill="#3b3b3b"/><rect x="7.2" y="5.8" width="3.3" height="1" fill="#3b3b3b"/><rect x="2.5" y="8.6" width="3.3" height="1" fill="#3b3b3b"/><rect x="7.2" y="8.6" width="3.3" height="1" fill="#3b3b3b"/><rect x="2.5" y="11.399999999999999" width="3.3" height="1" fill="#3b3b3b"/><rect x="7.2" y="11.399999999999999" width="3.3" height="1" fill="#3b3b3b"/><rect x="2.5" y="14.2" width="3.3" height="1" fill="#3b3b3b"/><rect x="7.2" y="14.2" width="3.3" height="1" fill="#3b3b3b"/></g><g transform="translate(293,511)"><rect x="0.5" y="0.5" width="15" height="15" fill="#e9e9e9" stroke="#b9b9b9"/><path d="M1 15 L6 8 L9 11 L12 8" fill="none" stroke="#b9b9b9"/><polygon points="15.90,11.62 15.90,12.38 14.55,12.77 14.35,13.26 15.03,14.49 14.49,15.03 13.26,14.35 12.77,14.55 12.38,15.90 11.62,15.90 11.23,14.55 10.74,14.35 9.51,15.03 8.97,14.49 9.65,13.26 9.45,12.77 8.10,12.38 8.10,11.62 9.45,11.23 9.65,10.74 8.97,9.51 9.51,8.97 10.74,9.65 11.23,9.45 11.62,8.10 12.38,8.10 12.77,9.45 13.26,9.65 14.49,8.97 15.03,9.51 14.35,10.74 14.55,11.23" fill="#fff" stroke="#b9b9b9" stroke-width="1.05" stroke-linejoin="round"/><circle cx="12" cy="12" r="1.18" fill="none" stroke="#b9b9b9" stroke-width="1"/></g><g transform="translate(293,535)"><circle cx="10" cy="5" r="4.5" fill="#eee" stroke="#b9b9b9"/><rect x="0.5" y="6" width="9" height="9" fill="#eee" stroke="#b9b9b9"/><polygon points="15.90,11.62 15.90,12.38 14.55,12.77 14.35,13.26 15.03,14.49 14.49,15.03 13.26,14.35 12.77,14.55 12.38,15.90 11.62,15.90 11.23,14.55 10.74,14.35 9.51,15.03 8.97,14.49 9.65,13.26 9.45,12.77 8.10,12.38 8.10,11.62 9.45,11.23 9.65,10.74 8.97,9.51 9.51,8.97 10.74,9.65 11.23,9.45 11.62,8.10 12.38,8.10 12.77,9.45 13.26,9.65 14.49,8.97 15.03,9.51 14.35,10.74 14.55,11.23" fill="#fff" stroke="#b9b9b9" stroke-width="1.05" stroke-linejoin="round"/><circle cx="12" cy="12" r="1.18" fill="none" stroke="#b9b9b9" stroke-width="1"/></g><g transform="translate(293,559)"><rect x="2" y="2" width="12" height="12" fill="#e9e9e9" stroke="#b9b9b9"/><rect x="0" y="0" width="3" height="3" fill="#b9b9b9"/><rect x="13" y="0" width="3" height="3" fill="#b9b9b9"/><rect x="0" y="13" width="3" height="3" fill="#b9b9b9"/><polygon points="15.90,11.62 15.90,12.38 14.55,12.77 14.35,13.26 15.03,14.49 14.49,15.03 13.26,14.35 12.77,14.55 12.38,15.90 11.62,15.90 11.23,14.55 10.74,14.35 9.51,15.03 8.97,14.49 9.65,13.26 9.45,12.77 8.10,12.38 8.10,11.62 9.45,11.23 9.65,10.74 8.97,9.51 9.51,8.97 10.74,9.65 11.23,9.45 11.62,8.10 12.38,8.10 12.77,9.45 13.26,9.65 14.49,8.97 15.03,9.51 14.35,10.74 14.55,11.23" fill="#fff" stroke="#b9b9b9" stroke-width="1.05" stroke-linejoin="round"/><circle cx="12" cy="12" r="1.18" fill="none" stroke="#b9b9b9" stroke-width="1"/></g><g transform="translate(293,635)"><circle cx="8" cy="2.5" r="1.8" fill="none" stroke="#b9b9b9"/><path d="M8 4.5 V15 M4.5 7 H11.5 M1 10 Q2 15 8 15 Q14 15 15 10 M0 11.5 L1 10 L2.5 11.5 M13.5 11.5 L15 10 L16 11.5" fill="none" stroke="#b9b9b9" stroke-width="1.1"/></g><g transform="translate(293,659)"><rect x="0" y="1" width="16" height="1" fill="#b9b9b9"/><rect x="0" y="14" width="16" height="1" fill="#b9b9b9"/><rect x="0" y="4" width="3" height="1" fill="#b9b9b9"/><rect x="0" y="7" width="3" height="1" fill="#b9b9b9"/><rect x="0" y="10" width="3" height="1" fill="#b9b9b9"/><rect x="13" y="4" width="3" height="1" fill="#b9b9b9"/><rect x="13" y="7" width="3" height="1" fill="#b9b9b9"/><rect x="13" y="10" width="3" height="1" fill="#b9b9b9"/><rect x="4.5" y="3.5" width="7" height="9" fill="#d7d7d7" stroke="#b9b9b9"/></g><g transform="translate(293,683)"><rect x="3.5" y="0.5" width="12" height="11" fill="none" stroke="#b9b9b9" stroke-width="1.1"/><rect x="0.5" y="4.5" width="11" height="11" fill="#dcdcdc" stroke="#b9b9b9" stroke-width="1.1"/></g><g transform="translate(293,707)"><path d="M0.5 15.5 L4.5 1 V15.5Z" fill="#d5d5d5" stroke="#b9b9b9"/><path d="M7 15.5 L15.5 15.5 L7 9Z" fill="#d5d5d5" stroke="#b9b9b9"/><path d="M8 4 Q13 3 14 8 M7 3 L9 1 M7 3 L9 5.5" fill="none" stroke="#b9b9b9" stroke-width="1.1"/></g><g transform="translate(293,731)"><rect x="3" y="3" width="8" height="8" fill="#dcdcdc" stroke="#b9b9b9"/><rect x="6" y="6" width="8" height="8" fill="#dcdcdc" stroke="#b9b9b9"/><rect x="0" y="0" width="3" height="3" fill="#b9b9b9"/><rect x="0" y="13" width="3" height="3" fill="#b9b9b9"/><rect x="13" y="0" width="3" height="3" fill="#b9b9b9"/><rect x="13" y="13" width="3" height="3" fill="#b9b9b9"/></g></svg>
<div class="t" style="left:31.60px;top:8px;font-size:14px;transform:scaleX(0.9182);"><span class="r" style="width:30.156px"><span style="transform:scaleX(1.077)">無題</span></span></div><div class="t" style="left:63.84px;top:8px;font-size:14.5px;transform:scaleX(0.9563);-webkit-text-stroke:0;">1 — LibreOffice Writer</div><div class="t" style="left:10.86px;top:37.6px;font-size:14px;transform:scaleX(0.9545);"><span class="r" style="width:43.680px"><span style="transform:scaleX(0.78)">ファイル</span></span><span class="r" style="width:17.604px"><span style="transform:scaleX(0.984)">(F)</span></span></div><div class="t" style="left:90.30px;top:37.6px;font-size:14px;transform:scaleX(0.9680);"><span class="r" style="width:30.156px"><span style="transform:scaleX(1.077)">編集</span></span><span class="r" style="width:18.373px"><span style="transform:scaleX(0.984)">(E)</span></span></div><div class="t" style="left:158.60px;top:37.6px;font-size:14px;transform:scaleX(0.9910);"><span class="r" style="width:30.156px"><span style="transform:scaleX(1.077)">表示</span></span><span class="r" style="width:18.373px"><span style="transform:scaleX(0.984)">(V)</span></span></div><div class="t" style="left:227.40px;top:37.6px;font-size:14px;transform:scaleX(0.9782);"><span class="r" style="width:30.156px"><span style="transform:scaleX(1.077)">挿入</span></span><span class="r" style="width:13.007px"><span style="transform:scaleX(0.984)">(I)</span></span></div><div class="t" style="left:291.50px;top:37.6px;font-size:14px;transform:scaleX(0.9835);"><span class="r" style="width:30.156px"><span style="transform:scaleX(1.077)">書式</span></span><span class="r" style="width:19.895px"><span style="transform:scaleX(0.984)">(O)</span></span></div><div class="t" style="left:361.20px;top:37.6px;font-size:14px;transform:scaleX(1.0220);"><span class="r" style="width:43.680px"><span style="transform:scaleX(0.78)">スタイル</span></span><span class="r" style="width:18.373px"><span style="transform:scaleX(0.984)">(Y)</span></span></div><div class="t" style="left:445.00px;top:37.6px;font-size:14px;transform:scaleX(1.0316);"><span class="r" style="width:15.078px"><span style="transform:scaleX(1.077)">表</span></span><span class="r" style="width:18.373px"><span style="transform:scaleX(0.984)">(A)</span></span></div><div class="t" style="left:498.93px;top:37.6px;font-size:14px;transform:scaleX(0.9901);"><span class="r" style="width:43.680px"><span style="transform:scaleX(0.78)">フォーム</span></span><span class="r" style="width:19.127px"><span style="transform:scaleX(0.984)">(R)</span></span></div><div class="t" style="left:580.61px;top:37.6px;font-size:14px;transform:scaleX(1.0169);"><span class="r" style="width:32.760px"><span style="transform:scaleX(0.78)">ツール</span></span><span class="r" style="width:17.604px"><span style="transform:scaleX(0.984)">(T)</span></span></div><div class="t" style="left:651.21px;top:37.6px;font-size:14px;transform:scaleX(1.0119);"><span class="r" style="width:54.600px"><span style="transform:scaleX(0.78)">ウィンドウ</span></span><span class="r" style="width:22.186px"><span style="transform:scaleX(0.984)">(W)</span></span></div><div class="t" style="left:749.00px;top:37.6px;font-size:14px;transform:scaleX(1.0598);"><span class="r" style="width:32.760px"><span style="transform:scaleX(0.78)">ヘルプ</span></span><span class="r" style="width:19.127px"><span style="transform:scaleX(0.984)">(H)</span></span></div><div class="t" style="left:322.72px;top:63.5px;font-size:14px;transform:scaleX(1.0055);"><span class="r" style="width:43.680px"><span style="transform:scaleX(0.78)">テキスト</span></span><span class="r" style="width:18.373px"><span style="transform:scaleX(0.984)">(X)</span></span></div><div class="t" style="left:322.43px;top:87.5px;font-size:14px;transform:scaleX(0.9981);"><span class="r" style="width:30.156px"><span style="transform:scaleX(1.077)">間隔</span></span><span class="r" style="width:18.373px"><span style="transform:scaleX(0.984)">(S)</span></span></div><div class="t" style="left:322.40px;top:111.5px;font-size:14px;transform:scaleX(1.0168);"><span class="r" style="width:45.234px"><span style="transform:scaleX(1.077)">文字列</span></span><span class="r" style="width:10.920px"><span style="transform:scaleX(0.78)">の</span></span><span class="r" style="width:30.156px"><span style="transform:scaleX(1.077)">配置</span></span><span class="r" style="width:17.604px"><span style="transform:scaleX(0.984)">(T)</span></span></div><div class="t" style="left:323.50px;top:139.5px;font-size:14px;transform:scaleX(0.9904);"><span class="r" style="width:30.156px"><span style="transform:scaleX(1.077)">書式</span></span><span class="r" style="width:54.600px"><span style="transform:scaleX(0.78)">のコピーと</span></span><span class="r" style="width:15.078px"><span style="transform:scaleX(1.077)">貼</span></span><span class="r" style="width:10.920px"><span style="transform:scaleX(0.78)">り</span></span><span class="r" style="width:15.078px"><span style="transform:scaleX(1.077)">付</span></span><span class="r" style="width:10.920px"><span style="transform:scaleX(0.78)">け</span></span><span class="r" style="width:19.127px"><span style="transform:scaleX(0.984)">(C)</span></span></div><div class="t" style="left:323.50px;top:163.5px;font-size:14px;transform:scaleX(1.0094);"><span class="r" style="width:60.312px"><span style="transform:scaleX(1.077)">直接設定</span></span><span class="r" style="width:21.840px"><span style="transform:scaleX(0.78)">した</span></span><span class="r" style="width:30.156px"><span style="transform:scaleX(1.077)">書式</span></span><span class="r" style="width:10.920px"><span style="transform:scaleX(0.78)">の</span></span><span class="r" style="width:30.156px"><span style="transform:scaleX(1.077)">解除</span></span><span class="r" style="width:19.127px"><span style="transform:scaleX(0.984)">(D)</span></span></div><div class="t" style="left:323.50px;top:187.5px;font-size:14px;transform:scaleX(0.9794);"><span class="r" style="width:54.600px"><span style="transform:scaleX(0.78)">ハイライト</span></span><span class="r" style="width:17.604px"><span style="transform:scaleX(0.984)">(F)</span></span></div><div class="t" style="left:322.40px;top:215.5px;font-size:14px;transform:scaleX(1.0209);"><span class="r" style="width:30.156px"><span style="transform:scaleX(1.077)">文字</span></span><span class="r" style="width:10.920px"><span style="transform:scaleX(0.78)">の</span></span><span class="r" style="width:30.156px"><span style="transform:scaleX(1.077)">書式</span></span><span class="r" style="width:30.612px"><span style="transform:scaleX(0.984)">(H)...</span></span></div><div class="t" style="left:323.50px;top:239.5px;font-size:14px;transform:scaleX(1.0077);"><span class="r" style="width:30.156px"><span style="transform:scaleX(1.077)">段落</span></span><span class="r" style="width:10.920px"><span style="transform:scaleX(0.78)">の</span></span><span class="r" style="width:30.156px"><span style="transform:scaleX(1.077)">書式</span></span><span class="r" style="width:29.858px"><span style="transform:scaleX(0.984)">(A)...</span></span></div><div class="t" style="left:321.07px;top:263.5px;font-size:14px;transform:scaleX(1.0405);"><span class="r" style="width:32.760px"><span style="transform:scaleX(0.78)">リスト</span></span><span class="r" style="width:17.604px"><span style="transform:scaleX(0.984)">(T)</span></span></div><div class="t" style="left:322.42px;top:287.5px;font-size:14px;transform:scaleX(1.0047);"><span class="r" style="width:45.234px"><span style="transform:scaleX(1.077)">箇条書</span></span><span class="r" style="width:21.840px"><span style="transform:scaleX(0.78)">きと</span></span><span class="r" style="width:45.234px"><span style="transform:scaleX(1.077)">番号付</span></span><span class="r" style="width:10.920px"><span style="transform:scaleX(0.78)">け</span></span><span class="r" style="width:29.858px"><span style="transform:scaleX(0.984)">(B)...</span></span></div><div class="t" style="left:322.73px;top:311.5px;font-size:14px;transform:scaleX(0.9853);"><span class="r" style="width:32.760px"><span style="transform:scaleX(0.78)">テーマ</span></span><span class="r" style="width:29.858px"><span style="transform:scaleX(0.984)">(K)...</span></span></div><div class="t" style="left:323.50px;top:339.5px;font-size:14px;transform:scaleX(1.0030);"><span class="r" style="width:76.440px"><span style="transform:scaleX(0.78)">ページスタイル</span></span><span class="r" style="width:29.858px"><span style="transform:scaleX(0.984)">(P)...</span></span></div><div class="t" style="left:321.90px;top:363.5px;font-size:14px;transform:scaleX(1.0276);"><span class="r" style="width:76.440px"><span style="transform:scaleX(0.78)">タイトルページ</span></span><span class="r" style="width:32.134px"><span style="transform:scaleX(0.984)">(M)...</span></span></div><div class="t" style="left:321.95px;top:387.5px;font-size:14px;transform:scaleX(0.9911);color:#a0a0a0"><span class="r" style="width:43.680px"><span style="transform:scaleX(0.78)">コメント</span></span><span class="r" style="width:30.612px"><span style="transform:scaleX(0.984)">(N)...</span></span></div><div class="t" style="left:322.71px;top:411.5px;font-size:14px;transform:scaleX(1.0123);"><span class="r" style="width:21.840px"><span style="transform:scaleX(0.78)">ルビ</span></span><span class="r" style="width:30.612px"><span style="transform:scaleX(0.984)">(U)...</span></span></div><div class="t" style="left:323.50px;top:435.5px;font-size:14px;transform:scaleX(0.9908);"><span class="r" style="width:30.156px"><span style="transform:scaleX(1.077)">段組</span></span><span class="r" style="width:10.920px"><span style="transform:scaleX(0.78)">み</span></span><span class="r" style="width:28.321px"><span style="transform:scaleX(0.984)">(L)...</span></span></div><div class="t" style="left:323.50px;top:459.5px;font-size:14px;transform:scaleX(0.9811);"><span class="r" style="width:15.078px"><span style="transform:scaleX(1.077)">透</span></span><span class="r" style="width:21.840px"><span style="transform:scaleX(0.78)">かし</span></span><span class="r" style="width:31.380px"><span style="transform:scaleX(0.984)">(O)...</span></span></div><div class="t" style="left:322.74px;top:483.5px;font-size:14px;transform:scaleX(0.9796);color:#a0a0a0"><span class="r" style="width:54.600px"><span style="transform:scaleX(0.78)">セクション</span></span><span class="r" style="width:29.858px"><span style="transform:scaleX(0.984)">(S)...</span></span></div><div class="t" style="left:322.40px;top:511.5px;font-size:14px;transform:scaleX(1.0218);color:#a0a0a0"><span class="r" style="width:30.156px"><span style="transform:scaleX(1.077)">画像</span></span><span class="r" style="width:13.007px"><span style="transform:scaleX(0.984)">(I)</span></span></div><div class="t" style="left:322.72px;top:535.5px;font-size:14px;transform:scaleX(0.9981);color:#a0a0a0"><span class="r" style="width:141.960px"><span style="transform:scaleX(0.78)">テキストボックスとシェイプ</span></span><span class="r" style="width:18.373px"><span style="transform:scaleX(0.984)">(E)</span></span></div><div class="t" style="left:322.75px;top:559.5px;font-size:14px;transform:scaleX(0.9658);color:#a0a0a0"><span class="r" style="width:120.120px"><span style="transform:scaleX(0.78)">フレームとオブジェクト</span></span><span class="r" style="width:16.067px"><span style="transform:scaleX(0.984)">(J)</span></span></div><div class="t" style="left:323.50px;top:583.5px;font-size:14px;transform:scaleX(0.9815);color:#a0a0a0"><span class="r" style="width:30.156px"><span style="transform:scaleX(1.077)">名前</span></span><span class="r" style="width:31.380px"><span style="transform:scaleX(0.984)">(Q)...</span></span></div><div class="t" style="left:323.50px;top:607.5px;font-size:14px;transform:scaleX(0.9696);color:#a0a0a0"><span class="r" style="width:30.156px"><span style="transform:scaleX(1.077)">代替</span></span><span class="r" style="width:43.680px"><span style="transform:scaleX(0.78)">テキスト</span></span><span class="r" style="width:30.612px"><span style="transform:scaleX(0.984)">(R)...</span></span></div><div class="t" style="left:321.86px;top:635.5px;font-size:14px;transform:scaleX(1.0481);color:#a0a0a0"><span class="r" style="width:43.680px"><span style="transform:scaleX(0.78)">アンカー</span></span><span class="r" style="width:19.127px"><span style="transform:scaleX(0.984)">(H)</span></span></div><div class="t" style="left:323.50px;top:659.5px;font-size:14px;transform:scaleX(0.9855);color:#a0a0a0"><span class="r" style="width:15.078px"><span style="transform:scaleX(1.077)">折</span></span><span class="r" style="width:10.920px"><span style="transform:scaleX(0.78)">り</span></span><span class="r" style="width:15.078px"><span style="transform:scaleX(1.077)">返</span></span><span class="r" style="width:10.920px"><span style="transform:scaleX(0.78)">し</span></span><span class="r" style="width:22.186px"><span style="transform:scaleX(0.984)">(W)</span></span></div><div class="t" style="left:322.38px;top:683.5px;font-size:14px;transform:scaleX(1.0387);color:#a0a0a0"><span class="r" style="width:30.156px"><span style="transform:scaleX(1.077)">配置</span></span><span class="r" style="width:18.373px"><span style="transform:scaleX(0.984)">(A)</span></span></div><div class="t" style="left:322.37px;top:707.5px;font-size:14px;transform:scaleX(1.0460);color:#a0a0a0"><span class="r" style="width:30.156px"><span style="transform:scaleX(1.077)">回転</span></span><span class="r" style="width:32.760px"><span style="transform:scaleX(0.78)">または</span></span><span class="r" style="width:30.156px"><span style="transform:scaleX(1.077)">反転</span></span><span class="r" style="width:18.373px"><span style="transform:scaleX(0.984)">(A)</span></span></div><div class="t" style="left:321.95px;top:731.5px;font-size:14px;transform:scaleX(0.9942);color:#a0a0a0"><span class="r" style="width:98.280px"><span style="transform:scaleX(0.78)">シェイプグループの</span></span><span class="r" style="width:30.156px"><span style="transform:scaleX(1.077)">操作</span></span><span class="r" style="width:19.895px"><span style="transform:scaleX(0.984)">(G)</span></span></div><div class="t" style="left:506.85px;top:164px;font-size:14px;transform:scaleX(1.1500);-webkit-text-stroke:0;">Ctrl+M</div><div class="t" style="left:477.00px;top:340px;font-size:14px;transform:scaleX(1.1000);-webkit-text-stroke:0;">Alt+Shift+P</div><div class="t" style="left:9.00px;top:108px;font-size:14px;transform:scaleX(1.0001);"><span class="r" style="width:60.312px"><span style="transform:scaleX(1.077)">標準段落</span></span><span class="r" style="width:43.680px"><span style="transform:scaleX(0.78)">スタイル</span></span></div><div class="t" style="left:1087.95px;top:142.5px;font-size:15px;transform:scaleX(0.9669);font-weight:bold;-webkit-text-stroke:0"><span class="r" style="width:58.500px"><span style="transform:scaleX(0.78)">プロパティ</span></span></div><div class="t" style="left:1094.86px;top:166px;font-size:14px;transform:scaleX(1.0746);font-weight:bold;-webkit-text-stroke:0"><span class="r" style="width:43.680px"><span style="transform:scaleX(0.78)">スタイル</span></span></div><div class="t" style="left:1087.50px;top:200.5px;font-size:14px;transform:scaleX(1.0001);"><span class="r" style="width:60.312px"><span style="transform:scaleX(1.077)">標準段落</span></span><span class="r" style="width:43.680px"><span style="transform:scaleX(0.78)">スタイル</span></span></div><div class="t" style="left:1095.70px;top:231px;font-size:14px;transform:scaleX(0.9484);font-weight:bold;-webkit-text-stroke:0"><span class="r" style="width:30.156px"><span style="transform:scaleX(1.077)">文字</span></span></div><div class="t" style="left:1086.43px;top:264px;font-size:15px;transform:scaleX(0.9747);-webkit-text-stroke:0;">Noto Serif JP</div><div class="t" style="left:1310.43px;top:264px;font-size:15px;transform:scaleX(0.9667);-webkit-text-stroke:0;">10.5 pt</div><div class="t" style="left:1095.20px;top:355px;font-size:14px;transform:scaleX(0.9749);font-weight:bold;-webkit-text-stroke:0"><span class="r" style="width:30.156px"><span style="transform:scaleX(1.077)">段落</span></span></div><div class="t" style="left:1083.53px;top:467.5px;font-size:14px;transform:scaleX(0.9933);"><span class="r" style="width:30.156px"><span style="transform:scaleX(1.077)">間隔</span></span><span class="r" style="width:22.201px"><span style="transform:scaleX(0.984)">(S):</span></span></div><div class="t" style="left:1233.80px;top:467.5px;font-size:14px;transform:scaleX(1.0278);"><span class="r" style="width:54.600px"><span style="transform:scaleX(0.78)">インデント</span></span><span class="r" style="width:16.836px"><span style="transform:scaleX(0.984)">(I):</span></span></div><div class="t" style="left:1118.20px;top:523.5px;font-size:15px;transform:scaleX(0.9434);-webkit-text-stroke:0;">0.00 cm</div><div class="t" style="left:1118.20px;top:552.5px;font-size:15px;transform:scaleX(0.9434);-webkit-text-stroke:0;">0.00 cm</div><div class="t" style="left:1269.30px;top:523.5px;font-size:15px;transform:scaleX(0.9434);-webkit-text-stroke:0;">0.00 cm</div><div class="t" style="left:1269.30px;top:552.5px;font-size:15px;transform:scaleX(0.9434);-webkit-text-stroke:0;">0.00 cm</div><div class="t" style="left:1269.30px;top:581.5px;font-size:15px;transform:scaleX(0.9434);-webkit-text-stroke:0;">0.00 cm</div><div class="t" style="left:1085.00px;top:612.5px;font-size:14px;transform:scaleX(1.0089);"><span class="r" style="width:87.360px"><span style="transform:scaleX(0.78)">ハイフネーション</span></span><span class="r" style="width:22.955px"><span style="transform:scaleX(0.984)">(H):</span></span></div><div class="t" style="left:40.90px;top:1015.5px;font-size:12px;transform:scaleX(1.0269);"><span class="r" style="width:28.080px"><span style="transform:scaleX(0.78)">ページ</span></span><span class="r" style="width:26.261px"><span style="transform:scaleX(0.984)"> 1 / 1</span></span></div><div class="t" style="left:222.20px;top:1015.5px;font-size:12px;transform:scaleX(0.9330);"><span class="r" style="width:38.772px"><span style="transform:scaleX(1.077)">選択中</span></span><span class="r" style="width:16.421px"><span style="transform:scaleX(0.984)">: 7 </span></span><span class="r" style="width:25.848px"><span style="transform:scaleX(1.077)">単語</span></span><span class="r" style="width:16.421px"><span style="transform:scaleX(0.984)">, 7 </span></span><span class="r" style="width:25.848px"><span style="transform:scaleX(1.077)">文字</span></span></div><div class="t" style="left:508.50px;top:1015.5px;font-size:12px;transform:scaleX(0.9577);"><span class="r" style="width:25.848px"><span style="transform:scaleX(1.077)">標準</span></span><span class="r" style="width:65.520px"><span style="transform:scaleX(0.78)">ページスタイル</span></span></div><div class="t" style="left:766.92px;top:1015.5px;font-size:12px;transform:scaleX(0.9651);"><span class="r" style="width:38.772px"><span style="transform:scaleX(1.077)">日本語</span></span></div><div class="t" style="left:1386.89px;top:1015.5px;font-size:12px;transform:scaleX(0.9067);-webkit-text-stroke:0;">130%</div><div class="t" style="left:124.99px;top:289px;font-size:18px;transform:scaleX(1.0097);font-family:'Liberation Serif',serif;color:#1a1a1a;-webkit-text-stroke:0">時計・宝飾品類</div>
<div class="a" style="left:0px;top:0px;width:1426px;height:1032px;border:1px solid #6e6e6e;background:transparent"></div>
</body></html>
